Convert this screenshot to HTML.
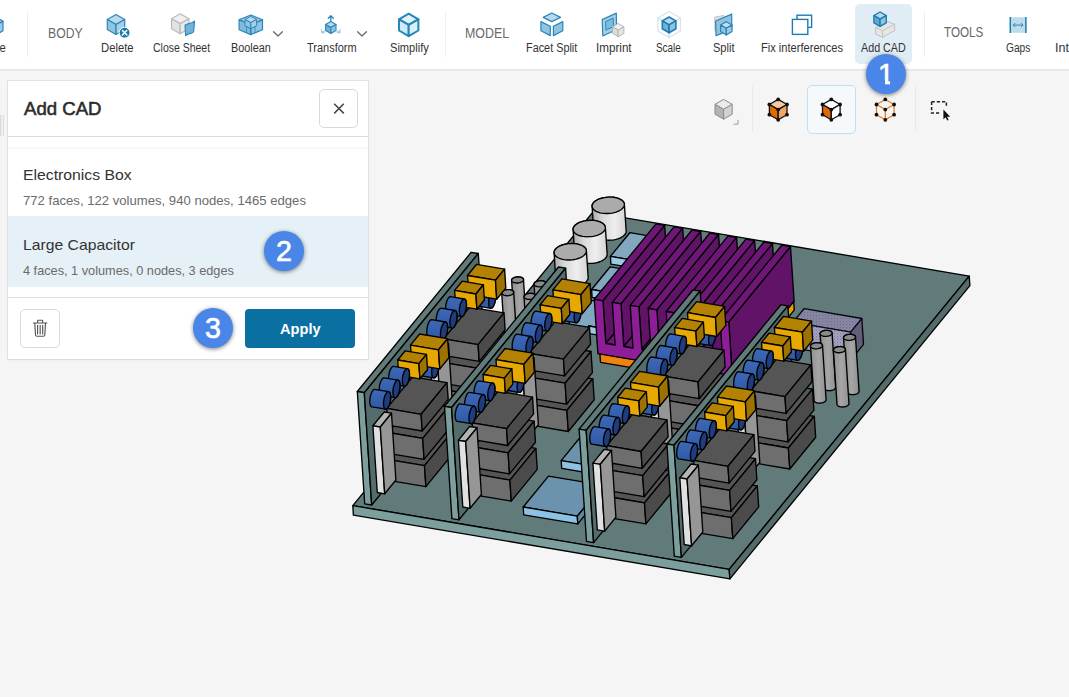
<!DOCTYPE html>
<html lang="en"><head><meta charset="utf-8"><title>Add CAD</title>
<style>
html,body{margin:0;padding:0}
body{width:1069px;height:697px;overflow:hidden;position:relative;background:#f5f5f5;font-family:"Liberation Sans",sans-serif}
.model,.icons{position:absolute;left:0;top:0}
.icons{pointer-events:none}
.t{position:absolute;white-space:nowrap;line-height:normal;display:inline-block}
.toolbar{position:absolute;left:0;top:0;width:1069px;height:69px;background:#fff;border-bottom:1px solid #e6e6e6;box-shadow:0 1px 1px rgba(0,0,0,.03)}
.sep{position:absolute;top:11px;width:1px;height:46px;background:#efefef}
.addbtn{position:absolute;left:855px;top:4px;width:57px;height:60px;border-radius:5px;background:#e1edf4}
.panel{position:absolute;left:8px;top:81px;width:360px;height:278px;background:#fff;box-shadow:0 0 0 1px rgba(0,0,0,.07),0 1px 2px rgba(0,0,0,.06)}
.phead{position:absolute;left:0;top:0;width:360px;height:55px;border-bottom:1px solid #dcdcdc}
.xbtn{position:absolute;left:311px;top:8px;width:37px;height:37px;border:1px solid #d9d9d9;border-radius:5px;background:#fff}
.scrollshadow{position:absolute;left:0;top:66px;width:360px;height:6px;background:linear-gradient(#f7f8f8,#fff)}
.ledge{position:absolute;left:0;top:115px;width:5px;height:21px;background:linear-gradient(90deg,#d6dada 0,#d6dada 1px,#eceeee 1px,#eceeee 3.4px,#dde0e0 3.4px,#dde0e0 4.4px,rgba(0,0,0,0) 4.4px)}
.sel{position:absolute;left:0;top:135.2px;width:360px;height:70.4px;background:#e5f0f7}
.pfoot{position:absolute;left:0;top:216px;width:360px;height:62px;border-top:1px solid #e0e0e0}
.trash{position:absolute;left:12.3px;top:228.1px;width:37.3px;height:37.3px;border:1px solid #d9d9d9;border-radius:5px;background:#fff}
.apply{position:absolute;left:237.3px;top:228.1px;width:109.8px;height:39.3px;border-radius:4px;background:#0a70a2}
.badge{position:absolute;width:40px;height:40px;border-radius:50%;background:#4a86e8;box-shadow:0 1px 4px rgba(0,0,0,.5);color:#fff;font-size:28.6px;line-height:41.6px;text-align:center;-webkit-text-stroke:.65px #fff}
.b1m{position:absolute;background:#4a86e8;height:5.4px;top:80.1px;width:7px}
.vsel{position:absolute;left:807px;top:85px;width:47px;height:47px;border:1px solid #bfe0ee;border-radius:5px;background:#f6f9fb}
.vsep{position:absolute;top:86px;width:1px;height:46px;background:#e9e9e9}

</style></head>
<body>
<svg class="model" width="1069" height="697" viewBox="0 0 1069 697">
<defs><linearGradient id="gb" x1="0" y1="0" x2="0" y2="1"><stop offset="0" stop-color="#3d69b8"/><stop offset="1" stop-color="#2f59a6"/></linearGradient><linearGradient id="gc" x1="0" y1="0" x2="1" y2="0"><stop offset="0" stop-color="#aaaaaa"/><stop offset=".3" stop-color="#d9d9d9"/><stop offset=".65" stop-color="#eeeeee"/><stop offset="1" stop-color="#d4d4d4"/></linearGradient><linearGradient id="gp" x1="0" y1="0" x2="1" y2="0"><stop offset="0" stop-color="#8f8f8f"/><stop offset=".5" stop-color="#a6a6a6"/><stop offset="1" stop-color="#919191"/></linearGradient><pattern id="dt" width="3" height="3" patternUnits="userSpaceOnUse"><rect x="0" y="0" width="1.2" height="1.2" fill="#7a3fa8" opacity=".55"/><rect x="1.5" y="1.5" width="1.2" height="1.2" fill="#5a6fb0" opacity=".4"/></pattern></defs>
<polygon points="352.8,505.6 729.2,569.4 969.2,276.1 592.8,212.3" fill="#607b7a" stroke="#000" stroke-width="1.35" stroke-linejoin="round"/><polygon points="353.4,515.1 729.9,578.9 729.2,569.4 352.8,505.6" fill="#7c9f9e" stroke="#000" stroke-width="1.35" stroke-linejoin="round"/><polygon points="729.9,578.9 969.9,285.6 969.2,276.1 729.2,569.4" fill="#546c6b" stroke="#000" stroke-width="1.35" stroke-linejoin="round"/>
<path d="M624.4,204.7 L626.2,231.4 L626.0,232.4 L625.6,233.5 L624.9,234.5 L623.9,235.5 L622.7,236.5 L621.3,237.4 L619.7,238.1 L617.9,238.8 L616.0,239.4 L614.0,239.8 L611.9,240.1 L609.8,240.2 L607.7,240.2 L605.6,240.1 L603.6,239.9 L601.7,239.5 L600.0,238.9 L598.4,238.3 L597.0,237.6 L595.9,236.7 L595.0,235.8 L594.3,234.8 L593.9,233.8 L593.8,232.7 L592.1,206.0 L592.2,204.9 L592.7,203.9 L593.4,202.8 L594.4,201.8 L595.6,200.9 L597.0,200.0 L598.6,199.2 L600.4,198.6 L602.3,198.0 L604.3,197.6 L606.4,197.3 L608.5,197.1 L610.6,197.1 L612.7,197.2 L614.7,197.5 L616.5,197.9 L618.3,198.4 L619.8,199.1 L621.2,199.8 L622.4,200.6 L623.3,201.6 L623.9,202.6 L624.3,203.6Z" fill="url(#gc)" stroke="#000" stroke-width="1.35" stroke-linejoin="round"/><path d="M623.1,207.8 L623.8,206.8 L624.2,205.7 L624.4,204.7 L624.3,203.6 L623.9,202.6 L623.3,201.6 L622.4,200.6 L621.2,199.8 L619.8,199.1 L618.3,198.4 L616.5,197.9 L614.7,197.5 L612.7,197.2 L610.6,197.1 L608.5,197.1 L606.4,197.3 L604.3,197.6 L602.3,198.0 L600.4,198.6 L598.6,199.2 L597.0,200.0 L595.6,200.9 L594.4,201.8 L593.4,202.8 L592.7,203.9 L592.2,204.9 L592.1,206.0 L592.2,207.1 L592.6,208.1 L593.2,209.1 L594.1,210.0 L595.3,210.9 L596.6,211.6 L598.2,212.2 L599.9,212.8 L601.8,213.2 L603.8,213.4 L605.9,213.5 L608.0,213.5 L610.1,213.4 L612.2,213.1 L614.2,212.6 L616.1,212.1 L617.9,211.4 L619.5,210.7 L620.9,209.8 L622.1,208.8Z" fill="#ababab" stroke="#000" stroke-width="1.35"/>
<path d="M605.4,227.9 L607.2,254.6 L607.0,255.6 L606.6,256.7 L605.9,257.8 L604.9,258.8 L603.7,259.7 L602.3,260.6 L600.7,261.3 L598.9,262.0 L597.0,262.6 L595.0,263.0 L592.9,263.3 L590.8,263.4 L588.7,263.5 L586.6,263.3 L584.6,263.1 L582.7,262.7 L581.0,262.2 L579.4,261.5 L578.0,260.8 L576.9,259.9 L576.0,259.0 L575.3,258.0 L574.9,257.0 L574.8,255.9 L573.1,229.2 L573.2,228.1 L573.7,227.1 L574.4,226.0 L575.4,225.0 L576.6,224.1 L578.0,223.2 L579.6,222.4 L581.4,221.8 L583.3,221.2 L585.3,220.8 L587.4,220.5 L589.5,220.3 L591.6,220.3 L593.7,220.4 L595.7,220.7 L597.5,221.1 L599.3,221.6 L600.9,222.3 L602.2,223.0 L603.4,223.9 L604.3,224.8 L604.9,225.8 L605.3,226.8Z" fill="url(#gc)" stroke="#000" stroke-width="1.35" stroke-linejoin="round"/><path d="M604.1,231.1 L604.8,230.0 L605.2,228.9 L605.4,227.9 L605.3,226.8 L604.9,225.8 L604.3,224.8 L603.4,223.9 L602.2,223.0 L600.9,222.3 L599.3,221.6 L597.5,221.1 L595.7,220.7 L593.7,220.4 L591.6,220.3 L589.5,220.3 L587.4,220.5 L585.3,220.8 L583.3,221.2 L581.4,221.8 L579.6,222.4 L578.0,223.2 L576.6,224.1 L575.4,225.0 L574.4,226.0 L573.7,227.1 L573.2,228.1 L573.1,229.2 L573.2,230.3 L573.6,231.3 L574.2,232.3 L575.1,233.2 L576.3,234.1 L577.6,234.8 L579.2,235.5 L581.0,236.0 L582.8,236.4 L584.8,236.6 L586.9,236.8 L589.0,236.7 L591.1,236.6 L593.2,236.3 L595.2,235.9 L597.1,235.3 L598.9,234.6 L600.5,233.9 L601.9,233.0 L603.1,232.1Z" fill="#ababab" stroke="#000" stroke-width="1.35"/>
<polygon points="610.4,256.4 667.2,266.0 686.6,242.3 629.8,232.7" fill="#82a8c0" stroke="#000" stroke-width="1.35" stroke-linejoin="round"/><polygon points="610.9,264.1 667.7,273.7 667.2,266.0 610.4,256.4" fill="#9ccbe8" stroke="#000" stroke-width="1.35" stroke-linejoin="round"/><polygon points="667.7,273.7 687.1,250.1 686.6,242.3 667.2,266.0" fill="#7094ac" stroke="#000" stroke-width="1.35" stroke-linejoin="round"/>
<path d="M586.4,251.1 L588.2,277.8 L588.0,278.9 L587.6,279.9 L586.9,281.0 L585.9,282.0 L584.7,282.9 L583.3,283.8 L581.7,284.6 L579.9,285.2 L578.0,285.8 L576.0,286.2 L573.9,286.5 L571.8,286.7 L569.7,286.7 L567.6,286.5 L565.6,286.3 L563.7,285.9 L562.0,285.4 L560.4,284.7 L559.0,284.0 L557.9,283.1 L557.0,282.2 L556.3,281.2 L556.0,280.2 L555.8,279.1 L554.1,252.4 L554.3,251.3 L554.7,250.3 L555.4,249.2 L556.4,248.2 L557.6,247.3 L559.0,246.4 L560.6,245.7 L562.4,245.0 L564.3,244.4 L566.3,244.0 L568.4,243.7 L570.5,243.6 L572.6,243.5 L574.7,243.7 L576.7,243.9 L578.5,244.3 L580.3,244.8 L581.9,245.5 L583.2,246.2 L584.4,247.1 L585.3,248.0 L585.9,249.0 L586.3,250.0Z" fill="url(#gc)" stroke="#000" stroke-width="1.35" stroke-linejoin="round"/><path d="M585.1,254.3 L585.8,253.2 L586.3,252.2 L586.4,251.1 L586.3,250.0 L585.9,249.0 L585.3,248.0 L584.4,247.1 L583.2,246.2 L581.9,245.5 L580.3,244.8 L578.5,244.3 L576.7,243.9 L574.7,243.7 L572.6,243.5 L570.5,243.6 L568.4,243.7 L566.3,244.0 L564.3,244.4 L562.4,245.0 L560.6,245.7 L559.0,246.4 L557.6,247.3 L556.4,248.2 L555.4,249.2 L554.7,250.3 L554.3,251.3 L554.1,252.4 L554.2,253.5 L554.6,254.5 L555.2,255.5 L556.1,256.4 L557.3,257.3 L558.6,258.0 L560.2,258.7 L562.0,259.2 L563.8,259.6 L565.8,259.8 L567.9,260.0 L570.0,260.0 L572.1,259.8 L574.2,259.5 L576.2,259.1 L578.1,258.5 L579.9,257.8 L581.5,257.1 L582.9,256.2 L584.1,255.3Z" fill="#ababab" stroke="#000" stroke-width="1.35"/>
<polygon points="591.6,289.5 641.1,297.9 659.7,275.2 610.2,266.8" fill="#82a8c0" stroke="#000" stroke-width="1.35" stroke-linejoin="round"/><polygon points="592.1,297.3 641.6,305.7 641.1,297.9 591.6,289.5" fill="#9ccbe8" stroke="#000" stroke-width="1.35" stroke-linejoin="round"/><polygon points="641.6,305.7 660.2,282.9 659.7,275.2 641.1,297.9" fill="#7094ac" stroke="#000" stroke-width="1.35" stroke-linejoin="round"/>
<polygon points="555.2,334.0 579.0,338.1 588.9,326.0 619.2,331.1 637.8,308.4 583.7,299.2" fill="#82a8c0" stroke="#000" stroke-width="1.35" stroke-linejoin="round"/><polygon points="555.7,341.8 579.5,345.8 579.0,338.1 555.2,334.0" fill="#9ccbe8" stroke="#000" stroke-width="1.35" stroke-linejoin="round"/><polygon points="589.4,333.7 619.7,338.8 619.2,331.1 588.9,326.0" fill="#9ccbe8" stroke="#000" stroke-width="1.35" stroke-linejoin="round"/><polygon points="579.5,345.8 589.4,333.7 588.9,326.0 579.0,338.1" fill="#7094ac" stroke="#000" stroke-width="1.35" stroke-linejoin="round"/><polygon points="619.7,338.8 638.3,316.1 637.8,308.4 619.2,331.1" fill="#7094ac" stroke="#000" stroke-width="1.35" stroke-linejoin="round"/>
<path d="M515.1,334.5 L511.6,280.2 L511.6,279.8 L511.8,279.4 L512.1,279.1 L512.4,278.7 L512.9,278.3 L513.4,278.0 L514.0,277.7 L514.6,277.5 L515.3,277.3 L516.1,277.1 L516.9,277.0 L517.6,277.0 L518.4,276.9 L519.2,277.0 L519.9,277.1 L520.6,277.2 L521.3,277.4 L521.9,277.7 L522.4,277.9 L522.8,278.3 L523.1,278.6 L523.4,279.0 L523.5,279.3 L523.5,279.7 L527.1,334.0 L527.1,334.4 L526.9,334.8 L526.6,335.2 L526.3,335.6 L525.8,335.9 L525.3,336.2 L524.7,336.5 L524.1,336.8 L523.3,337.0 L522.6,337.1 L521.8,337.2 L521.0,337.3 L520.3,337.3 L519.5,337.3 L518.8,337.2 L518.1,337.0 L517.4,336.8 L516.8,336.6 L516.3,336.3 L515.9,336.0 L515.6,335.6 L515.3,335.3 L515.2,334.9Z" fill="url(#gp)" stroke="#000" stroke-width="1.35" stroke-linejoin="round"/><path d="M523.1,280.9 L523.3,280.5 L523.5,280.1 L523.5,279.7 L523.5,279.3 L523.4,279.0 L523.1,278.6 L522.8,278.3 L522.4,277.9 L521.9,277.7 L521.3,277.4 L520.6,277.2 L519.9,277.1 L519.2,277.0 L518.4,276.9 L517.6,277.0 L516.9,277.0 L516.1,277.1 L515.3,277.3 L514.6,277.5 L514.0,277.7 L513.4,278.0 L512.9,278.3 L512.4,278.7 L512.1,279.1 L511.8,279.4 L511.6,279.8 L511.6,280.2 L511.6,280.6 L511.7,281.0 L512.0,281.4 L512.3,281.7 L512.7,282.0 L513.3,282.3 L513.8,282.5 L514.5,282.7 L515.2,282.9 L515.9,283.0 L516.7,283.0 L517.5,283.0 L518.2,283.0 L519.0,282.9 L519.8,282.7 L520.5,282.5 L521.1,282.2 L521.7,282.0 L522.3,281.6 L522.7,281.3Z" fill="#8a8a8a" stroke="#000" stroke-width="1.35"/>
<path d="M537.6,338.3 L534.0,284.0 L534.1,283.6 L534.2,283.2 L534.5,282.9 L534.9,282.5 L535.3,282.1 L535.8,281.8 L536.4,281.5 L537.1,281.3 L537.8,281.1 L538.5,280.9 L539.3,280.8 L540.1,280.8 L540.9,280.7 L541.6,280.8 L542.4,280.9 L543.1,281.0 L543.7,281.2 L544.3,281.5 L544.8,281.7 L545.2,282.1 L545.6,282.4 L545.8,282.8 L546.0,283.1 L546.0,283.5 L549.6,337.8 L549.5,338.2 L549.4,338.6 L549.1,339.0 L548.7,339.4 L548.3,339.7 L547.8,340.0 L547.2,340.3 L546.5,340.6 L545.8,340.8 L545.1,340.9 L544.3,341.0 L543.5,341.1 L542.7,341.1 L542.0,341.1 L541.2,341.0 L540.5,340.8 L539.9,340.6 L539.3,340.4 L538.8,340.1 L538.4,339.8 L538.0,339.5 L537.8,339.1 L537.6,338.7Z" fill="url(#gp)" stroke="#000" stroke-width="1.35" stroke-linejoin="round"/><path d="M545.5,284.7 L545.8,284.3 L545.9,283.9 L546.0,283.5 L546.0,283.1 L545.8,282.8 L545.6,282.4 L545.2,282.1 L544.8,281.7 L544.3,281.5 L543.7,281.2 L543.1,281.0 L542.4,280.9 L541.6,280.8 L540.9,280.7 L540.1,280.8 L539.3,280.8 L538.5,280.9 L537.8,281.1 L537.1,281.3 L536.4,281.5 L535.8,281.8 L535.3,282.1 L534.9,282.5 L534.5,282.9 L534.2,283.2 L534.1,283.6 L534.0,284.0 L534.1,284.4 L534.2,284.8 L534.4,285.2 L534.8,285.5 L535.2,285.8 L535.7,286.1 L536.3,286.4 L536.9,286.5 L537.6,286.7 L538.4,286.8 L539.1,286.8 L539.9,286.8 L540.7,286.8 L541.5,286.7 L542.2,286.5 L542.9,286.3 L543.6,286.1 L544.2,285.8 L544.7,285.4 L545.2,285.1Z" fill="#8a8a8a" stroke="#000" stroke-width="1.35"/>
<path d="M505.3,347.2 L501.7,292.9 L501.8,292.5 L502.0,292.1 L502.2,291.7 L502.6,291.3 L503.0,291.0 L503.6,290.7 L504.1,290.4 L504.8,290.1 L505.5,289.9 L506.3,289.8 L507.0,289.7 L507.8,289.6 L508.6,289.6 L509.4,289.6 L510.1,289.7 L510.8,289.9 L511.4,290.1 L512.0,290.3 L512.5,290.6 L513.0,290.9 L513.3,291.2 L513.5,291.6 L513.7,292.0 L513.7,292.4 L517.3,346.7 L517.2,347.1 L517.1,347.5 L516.8,347.8 L516.4,348.2 L516.0,348.6 L515.5,348.9 L514.9,349.2 L514.2,349.4 L513.5,349.6 L512.8,349.8 L512.0,349.9 L511.2,349.9 L510.4,350.0 L509.7,349.9 L508.9,349.8 L508.2,349.7 L507.6,349.5 L507.0,349.2 L506.5,349.0 L506.1,348.6 L505.7,348.3 L505.5,347.9 L505.4,347.6Z" fill="url(#gp)" stroke="#000" stroke-width="1.35" stroke-linejoin="round"/><path d="M513.2,293.6 L513.5,293.2 L513.7,292.8 L513.7,292.4 L513.7,292.0 L513.5,291.6 L513.3,291.2 L513.0,290.9 L512.5,290.6 L512.0,290.3 L511.4,290.1 L510.8,289.9 L510.1,289.7 L509.4,289.6 L508.6,289.6 L507.8,289.6 L507.0,289.7 L506.3,289.8 L505.5,289.9 L504.8,290.1 L504.1,290.4 L503.6,290.7 L503.0,291.0 L502.6,291.3 L502.2,291.7 L502.0,292.1 L501.8,292.5 L501.7,292.9 L501.8,293.3 L501.9,293.7 L502.2,294.0 L502.5,294.4 L502.9,294.7 L503.4,295.0 L504.0,295.2 L504.7,295.4 L505.4,295.5 L506.1,295.6 L506.9,295.7 L507.6,295.7 L508.4,295.6 L509.2,295.5 L509.9,295.3 L510.6,295.1 L511.3,294.9 L511.9,294.6 L512.4,294.3 L512.9,293.9Z" fill="#8a8a8a" stroke="#000" stroke-width="1.35"/>
<polygon points="599.9,353.7 732.5,376.2 793.7,301.4 661.0,279.0" fill="#f0820f" stroke="#000" stroke-width="1.35" stroke-linejoin="round"/><polygon points="600.5,362.3 733.1,384.8 732.5,376.2 599.9,353.7" fill="#f0820f" stroke="#000" stroke-width="1.35" stroke-linejoin="round"/><polygon points="733.1,384.8 794.2,310.1 793.7,301.4 732.5,376.2" fill="#e8a000" stroke="#000" stroke-width="1.35" stroke-linejoin="round"/><polygon points="597.1,342.0 731.6,364.8 793.3,289.3 658.8,266.5" fill="#6e1776" stroke="#000" stroke-width="1.35" stroke-linejoin="round"/><polygon points="594.3,299.3 603.0,300.8 664.7,225.4 656.0,223.9" fill="#6e1776" stroke="#000" stroke-width="1.35" stroke-linejoin="round"/><polygon points="605.8,343.5 667.5,268.0 664.7,225.4 603.0,300.8" fill="#611467" stroke="#000" stroke-width="1.35" stroke-linejoin="round"/><polygon points="612.3,302.4 621.0,303.9 682.7,228.4 674.0,226.9" fill="#6e1776" stroke="#000" stroke-width="1.35" stroke-linejoin="round"/><polygon points="623.8,346.5 685.5,271.1 682.7,228.4 621.0,303.9" fill="#611467" stroke="#000" stroke-width="1.35" stroke-linejoin="round"/><polygon points="630.2,305.4 638.9,306.9 700.7,231.5 692.0,230.0" fill="#6e1776" stroke="#000" stroke-width="1.35" stroke-linejoin="round"/><polygon points="641.8,349.5 703.5,274.1 700.7,231.5 638.9,306.9" fill="#611467" stroke="#000" stroke-width="1.35" stroke-linejoin="round"/><polygon points="648.2,308.5 656.9,309.9 718.6,234.5 709.9,233.0" fill="#6e1776" stroke="#000" stroke-width="1.35" stroke-linejoin="round"/><polygon points="659.7,352.6 721.4,277.2 718.6,234.5 656.9,309.9" fill="#611467" stroke="#000" stroke-width="1.35" stroke-linejoin="round"/><polygon points="666.2,311.5 674.9,313.0 736.6,237.6 727.9,236.1" fill="#6e1776" stroke="#000" stroke-width="1.35" stroke-linejoin="round"/><polygon points="677.7,355.6 739.4,280.2 736.6,237.6 674.9,313.0" fill="#611467" stroke="#000" stroke-width="1.35" stroke-linejoin="round"/><polygon points="684.1,314.6 692.8,316.0 754.6,240.6 745.9,239.1" fill="#6e1776" stroke="#000" stroke-width="1.35" stroke-linejoin="round"/><polygon points="695.6,358.7 757.4,283.2 754.6,240.6 692.8,316.0" fill="#611467" stroke="#000" stroke-width="1.35" stroke-linejoin="round"/><polygon points="702.1,317.6 710.8,319.1 772.5,243.6 763.8,242.2" fill="#6e1776" stroke="#000" stroke-width="1.35" stroke-linejoin="round"/><polygon points="713.6,361.7 775.3,286.3 772.5,243.6 710.8,319.1" fill="#611467" stroke="#000" stroke-width="1.35" stroke-linejoin="round"/><polygon points="720.1,320.7 728.8,322.1 790.5,246.7 781.8,245.2" fill="#6e1776" stroke="#000" stroke-width="1.35" stroke-linejoin="round"/><polygon points="732.3,376.4 794.1,301.0 790.5,246.7 728.8,322.1" fill="#611467" stroke="#000" stroke-width="1.35" stroke-linejoin="round"/><polygon points="597.9,353.6 732.3,376.4 728.8,322.1 720.1,320.7 722.9,363.3 713.6,361.7 710.8,319.1 702.1,317.6 704.9,360.2 695.6,358.7 692.8,316.0 684.1,314.6 686.9,357.2 677.7,355.6 674.9,313.0 666.2,311.5 669.0,354.2 659.7,352.6 656.9,309.9 648.2,308.5 651.0,351.1 641.8,349.5 638.9,306.9 630.2,305.4 633.0,348.1 623.8,346.5 621.0,303.9 612.3,302.4 615.1,345.0 605.8,343.5 603.0,300.8 594.3,299.3" fill="#8e1e98" stroke="#000" stroke-width="1.35" stroke-linejoin="round"/>
<path d="M527.6,350.9 L524.0,296.7 L524.1,296.3 L524.2,295.9 L524.5,295.5 L524.9,295.1 L525.3,294.8 L525.8,294.4 L526.4,294.2 L527.1,293.9 L527.8,293.7 L528.5,293.5 L529.3,293.4 L530.1,293.4 L530.9,293.4 L531.6,293.4 L532.4,293.5 L533.1,293.7 L533.7,293.9 L534.3,294.1 L534.8,294.4 L535.2,294.7 L535.6,295.0 L535.8,295.4 L535.9,295.8 L536.0,296.2 L539.6,350.4 L539.5,350.8 L539.3,351.2 L539.1,351.6 L538.7,352.0 L538.3,352.3 L537.8,352.7 L537.2,352.9 L536.5,353.2 L535.8,353.4 L535.0,353.6 L534.3,353.7 L533.5,353.7 L532.7,353.7 L531.9,353.7 L531.2,353.6 L530.5,353.4 L529.9,353.2 L529.3,353.0 L528.8,352.7 L528.3,352.4 L528.0,352.1 L527.8,351.7 L527.6,351.3Z" fill="url(#gp)" stroke="#000" stroke-width="1.35" stroke-linejoin="round"/><path d="M535.5,297.3 L535.8,297.0 L535.9,296.6 L536.0,296.2 L535.9,295.8 L535.8,295.4 L535.6,295.0 L535.2,294.7 L534.8,294.4 L534.3,294.1 L533.7,293.9 L533.1,293.7 L532.4,293.5 L531.6,293.4 L530.9,293.4 L530.1,293.4 L529.3,293.4 L528.5,293.5 L527.8,293.7 L527.1,293.9 L526.4,294.2 L525.8,294.4 L525.3,294.8 L524.9,295.1 L524.5,295.5 L524.2,295.9 L524.1,296.3 L524.0,296.7 L524.0,297.1 L524.2,297.4 L524.4,297.8 L524.8,298.1 L525.2,298.5 L525.7,298.7 L526.3,299.0 L526.9,299.2 L527.6,299.3 L528.4,299.4 L529.1,299.5 L529.9,299.4 L530.7,299.4 L531.5,299.3 L532.2,299.1 L532.9,298.9 L533.6,298.7 L534.2,298.4 L534.7,298.1 L535.1,297.7Z" fill="#8a8a8a" stroke="#000" stroke-width="1.35"/>
<polygon points="793.0,322.3 850.8,332.1 861.8,318.5 804.1,308.7" fill="#868a9c" stroke="#000" stroke-width="1.35" stroke-linejoin="round"/><polygon points="794.7,348.1 852.5,357.9 850.8,332.1 793.0,322.3" fill="#a3a7bc" stroke="#000" stroke-width="1.35" stroke-linejoin="round"/><polygon points="852.5,357.9 863.5,344.4 861.8,318.5 850.8,332.1" fill="#5e6170" stroke="#000" stroke-width="1.35" stroke-linejoin="round"/><polygon points="793.0,322.3 850.8,332.1 861.8,318.5 804.1,308.7" fill="url(#dt)"/><polygon points="794.7,348.1 852.5,357.9 850.8,332.1 793.0,322.3" fill="url(#dt)"/><polygon points="852.5,357.9 863.5,344.4 861.8,318.5 850.8,332.1" fill="url(#dt)"/>
<path d="M823.7,387.9 L820.1,333.6 L820.2,333.2 L820.4,332.8 L820.6,332.4 L821.0,332.1 L821.4,331.7 L822.0,331.4 L822.5,331.1 L823.2,330.9 L823.9,330.7 L824.7,330.5 L825.4,330.4 L826.2,330.3 L827.0,330.3 L827.8,330.4 L828.5,330.5 L829.2,330.6 L829.8,330.8 L830.4,331.1 L830.9,331.3 L831.4,331.6 L831.7,332.0 L831.9,332.4 L832.1,332.7 L832.1,333.1 L835.7,387.4 L835.6,387.8 L835.5,388.2 L835.2,388.6 L834.8,388.9 L834.4,389.3 L833.9,389.6 L833.3,389.9 L832.6,390.2 L831.9,390.4 L831.2,390.5 L830.4,390.6 L829.6,390.7 L828.8,390.7 L828.1,390.6 L827.3,390.5 L826.6,390.4 L826.0,390.2 L825.4,390.0 L824.9,389.7 L824.5,389.4 L824.1,389.0 L823.9,388.7 L823.8,388.3Z" fill="url(#gp)" stroke="#000" stroke-width="1.35" stroke-linejoin="round"/><path d="M831.6,334.3 L831.9,333.9 L832.0,333.5 L832.1,333.1 L832.1,332.7 L831.9,332.4 L831.7,332.0 L831.4,331.6 L830.9,331.3 L830.4,331.1 L829.8,330.8 L829.2,330.6 L828.5,330.5 L827.8,330.4 L827.0,330.3 L826.2,330.3 L825.4,330.4 L824.7,330.5 L823.9,330.7 L823.2,330.9 L822.5,331.1 L822.0,331.4 L821.4,331.7 L821.0,332.1 L820.6,332.4 L820.4,332.8 L820.2,333.2 L820.1,333.6 L820.2,334.0 L820.3,334.4 L820.6,334.8 L820.9,335.1 L821.3,335.4 L821.8,335.7 L822.4,335.9 L823.1,336.1 L823.7,336.3 L824.5,336.4 L825.3,336.4 L826.0,336.4 L826.8,336.4 L827.6,336.2 L828.3,336.1 L829.0,335.9 L829.7,335.6 L830.3,335.3 L830.8,335.0 L831.3,334.7Z" fill="#8a8a8a" stroke="#000" stroke-width="1.35"/>
<path d="M847.1,391.9 L843.5,337.6 L843.6,337.2 L843.7,336.8 L844.0,336.4 L844.4,336.0 L844.8,335.7 L845.3,335.4 L845.9,335.1 L846.6,334.8 L847.3,334.6 L848.0,334.5 L848.8,334.4 L849.6,334.3 L850.4,334.3 L851.1,334.3 L851.9,334.4 L852.6,334.6 L853.2,334.8 L853.8,335.0 L854.3,335.3 L854.7,335.6 L855.1,335.9 L855.3,336.3 L855.4,336.7 L855.5,337.1 L859.1,391.4 L859.0,391.8 L858.8,392.2 L858.6,392.5 L858.2,392.9 L857.8,393.3 L857.3,393.6 L856.7,393.9 L856.0,394.1 L855.3,394.3 L854.5,394.5 L853.8,394.6 L853.0,394.6 L852.2,394.7 L851.4,394.6 L850.7,394.5 L850.0,394.4 L849.4,394.2 L848.8,393.9 L848.3,393.7 L847.8,393.3 L847.5,393.0 L847.3,392.6 L847.1,392.3Z" fill="url(#gp)" stroke="#000" stroke-width="1.35" stroke-linejoin="round"/><path d="M855.0,338.3 L855.3,337.9 L855.4,337.5 L855.5,337.1 L855.4,336.7 L855.3,336.3 L855.1,335.9 L854.7,335.6 L854.3,335.3 L853.8,335.0 L853.2,334.8 L852.6,334.6 L851.9,334.4 L851.1,334.3 L850.4,334.3 L849.6,334.3 L848.8,334.4 L848.0,334.5 L847.3,334.6 L846.6,334.8 L845.9,335.1 L845.3,335.4 L844.8,335.7 L844.4,336.0 L844.0,336.4 L843.7,336.8 L843.6,337.2 L843.5,337.6 L843.5,338.0 L843.7,338.4 L843.9,338.7 L844.3,339.1 L844.7,339.4 L845.2,339.7 L845.8,339.9 L846.4,340.1 L847.1,340.2 L847.9,340.3 L848.6,340.4 L849.4,340.4 L850.2,340.3 L851.0,340.2 L851.7,340.0 L852.4,339.8 L853.1,339.6 L853.7,339.3 L854.2,339.0 L854.6,338.6Z" fill="#8a8a8a" stroke="#000" stroke-width="1.35"/>
<path d="M814.1,400.3 L810.5,346.0 L810.6,345.6 L810.7,345.2 L811.0,344.9 L811.3,344.5 L811.8,344.1 L812.3,343.8 L812.9,343.5 L813.6,343.3 L814.3,343.1 L815.0,342.9 L815.8,342.8 L816.6,342.7 L817.4,342.7 L818.1,342.8 L818.9,342.9 L819.6,343.0 L820.2,343.2 L820.8,343.5 L821.3,343.7 L821.7,344.1 L822.1,344.4 L822.3,344.8 L822.4,345.1 L822.5,345.5 L826.1,399.8 L826.0,400.2 L825.8,400.6 L825.6,401.0 L825.2,401.4 L824.8,401.7 L824.2,402.0 L823.6,402.3 L823.0,402.6 L822.3,402.8 L821.5,402.9 L820.8,403.0 L820.0,403.1 L819.2,403.1 L818.4,403.1 L817.7,403.0 L817.0,402.8 L816.4,402.6 L815.8,402.4 L815.3,402.1 L814.8,401.8 L814.5,401.4 L814.3,401.1 L814.1,400.7Z" fill="url(#gp)" stroke="#000" stroke-width="1.35" stroke-linejoin="round"/><path d="M822.0,346.7 L822.3,346.3 L822.4,345.9 L822.5,345.5 L822.4,345.1 L822.3,344.8 L822.1,344.4 L821.7,344.1 L821.3,343.7 L820.8,343.5 L820.2,343.2 L819.6,343.0 L818.9,342.9 L818.1,342.8 L817.4,342.7 L816.6,342.7 L815.8,342.8 L815.0,342.9 L814.3,343.1 L813.6,343.3 L812.9,343.5 L812.3,343.8 L811.8,344.1 L811.3,344.5 L811.0,344.9 L810.7,345.2 L810.6,345.6 L810.5,346.0 L810.5,346.4 L810.7,346.8 L810.9,347.2 L811.3,347.5 L811.7,347.8 L812.2,348.1 L812.8,348.3 L813.4,348.5 L814.1,348.7 L814.9,348.8 L815.6,348.8 L816.4,348.8 L817.2,348.8 L818.0,348.7 L818.7,348.5 L819.4,348.3 L820.1,348.0 L820.7,347.8 L821.2,347.4 L821.6,347.1Z" fill="#8a8a8a" stroke="#000" stroke-width="1.35"/>
<path d="M837.0,404.2 L833.4,349.9 L833.5,349.5 L833.6,349.1 L833.9,348.7 L834.3,348.4 L834.7,348.0 L835.2,347.7 L835.8,347.4 L836.5,347.2 L837.2,347.0 L837.9,346.8 L838.7,346.7 L839.5,346.6 L840.3,346.6 L841.0,346.7 L841.8,346.8 L842.5,346.9 L843.1,347.1 L843.7,347.3 L844.2,347.6 L844.6,347.9 L845.0,348.3 L845.2,348.6 L845.4,349.0 L845.4,349.4 L849.0,403.7 L848.9,404.1 L848.8,404.5 L848.5,404.9 L848.1,405.2 L847.7,405.6 L847.2,405.9 L846.6,406.2 L845.9,406.4 L845.2,406.6 L844.5,406.8 L843.7,406.9 L842.9,407.0 L842.1,407.0 L841.4,406.9 L840.6,406.8 L839.9,406.7 L839.3,406.5 L838.7,406.3 L838.2,406.0 L837.8,405.7 L837.4,405.3 L837.2,405.0 L837.0,404.6Z" fill="url(#gp)" stroke="#000" stroke-width="1.35" stroke-linejoin="round"/><path d="M844.9,350.6 L845.2,350.2 L845.3,349.8 L845.4,349.4 L845.4,349.0 L845.2,348.6 L845.0,348.3 L844.6,347.9 L844.2,347.6 L843.7,347.3 L843.1,347.1 L842.5,346.9 L841.8,346.8 L841.0,346.7 L840.3,346.6 L839.5,346.6 L838.7,346.7 L837.9,346.8 L837.2,347.0 L836.5,347.2 L835.8,347.4 L835.2,347.7 L834.7,348.0 L834.3,348.4 L833.9,348.7 L833.6,349.1 L833.5,349.5 L833.4,349.9 L833.5,350.3 L833.6,350.7 L833.8,351.1 L834.2,351.4 L834.6,351.7 L835.1,352.0 L835.7,352.2 L836.3,352.4 L837.0,352.6 L837.8,352.7 L838.5,352.7 L839.3,352.7 L840.1,352.6 L840.9,352.5 L841.6,352.4 L842.3,352.2 L843.0,351.9 L843.6,351.6 L844.1,351.3 L844.5,351.0Z" fill="#8a8a8a" stroke="#000" stroke-width="1.35"/>
<polygon points="357.3,391.5 364.3,392.7 478.3,253.5 471.2,252.3" fill="#607b7a" stroke="#000" stroke-width="1.35" stroke-linejoin="round"/><polygon points="364.7,503.8 371.7,505.0 364.3,392.7 357.3,391.5" fill="#7c9f9e" stroke="#000" stroke-width="1.35" stroke-linejoin="round"/><polygon points="371.7,505.0 485.7,365.7 478.3,253.5 364.3,392.7" fill="#546c6b" stroke="#000" stroke-width="1.35" stroke-linejoin="round"/>
<path d="M475.2,287.6 L493.5,290.7 L493.9,290.8 L494.3,291.0 L494.7,291.4 L495.0,291.9 L495.3,292.6 L495.5,293.4 L495.6,294.2 L495.7,295.2 L495.8,296.2 L495.7,297.3 L495.6,298.5 L495.5,299.6 L495.3,300.7 L495.0,301.9 L494.7,303.0 L494.4,304.0 L494.0,304.9 L493.6,305.8 L493.2,306.5 L492.7,307.2 L492.2,307.7 L491.8,308.0 L491.3,308.2 L490.9,308.3 L472.5,305.2 L472.1,305.1 L471.7,304.9 L471.4,304.5 L471.1,303.9 L470.8,303.3 L470.6,302.5 L470.4,301.7 L470.3,300.7 L470.3,299.7 L470.3,298.6 L470.4,297.4 L470.6,296.3 L470.8,295.1 L471.0,294.0 L471.3,292.9 L471.7,291.9 L472.0,291.0 L472.5,290.1 L472.9,289.3 L473.4,288.7 L473.8,288.2 L474.3,287.9 L474.7,287.7Z" fill="url(#gb)" stroke="#000" stroke-width="1.35" stroke-linejoin="round"/><path d="M495.7,295.2 L495.6,294.2 L495.5,293.4 L495.3,292.6 L495.0,291.9 L494.7,291.4 L494.3,291.0 L493.9,290.8 L493.5,290.7 L493.1,290.8 L492.6,291.0 L492.2,291.3 L491.7,291.8 L491.2,292.5 L490.8,293.2 L490.4,294.1 L490.0,295.0 L489.6,296.0 L489.3,297.1 L489.1,298.2 L488.9,299.4 L488.7,300.5 L488.7,301.7 L488.6,302.8 L488.7,303.8 L488.8,304.8 L488.9,305.6 L489.1,306.4 L489.4,307.1 L489.7,307.6 L490.1,308.0 L490.5,308.2 L490.9,308.3 L491.3,308.2 L491.8,308.0 L492.2,307.7 L492.7,307.2 L493.2,306.5 L493.6,305.8 L494.0,304.9 L494.4,304.0 L494.7,303.0 L495.0,301.9 L495.3,300.7 L495.5,299.6 L495.6,298.5 L495.7,297.3 L495.8,296.2Z" fill="#203c7c" stroke="#000" stroke-width="1.35"/>
<polygon points="467.5,275.5 495.5,280.2 504.6,269.1 476.6,264.3" fill="#b48202" stroke="#000" stroke-width="1.35" stroke-linejoin="round"/><polygon points="468.8,294.5 496.7,299.2 495.5,280.2 467.5,275.5" fill="#e8a802" stroke="#000" stroke-width="1.35" stroke-linejoin="round"/><polygon points="496.7,299.2 505.8,288.1 504.6,269.1 495.5,280.2" fill="#9e7201" stroke="#000" stroke-width="1.35" stroke-linejoin="round"/>
<polygon points="447.1,390.1 481.5,396.0 507.4,364.3 473.0,358.5" fill="#555555" stroke="#000" stroke-width="1.35" stroke-linejoin="round"/><polygon points="448.5,411.2 482.9,417.0 481.5,396.0 447.1,390.1" fill="#6e6e6e" stroke="#000" stroke-width="1.35" stroke-linejoin="round"/><polygon points="482.9,417.0 508.8,385.3 507.4,364.3 481.5,396.0" fill="#4b4b4b" stroke="#000" stroke-width="1.35" stroke-linejoin="round"/><polygon points="445.3,362.9 479.7,368.7 505.6,337.1 471.2,331.2" fill="#555555" stroke="#000" stroke-width="1.35" stroke-linejoin="round"/><polygon points="446.7,383.9 481.1,389.8 479.7,368.7 445.3,362.9" fill="#6e6e6e" stroke="#000" stroke-width="1.35" stroke-linejoin="round"/><polygon points="481.1,389.8 507.0,358.1 505.6,337.1 479.7,368.7" fill="#4b4b4b" stroke="#000" stroke-width="1.35" stroke-linejoin="round"/><polygon points="443.7,338.8 478.1,344.6 504.0,312.9 469.7,307.1" fill="#555555" stroke="#000" stroke-width="1.35" stroke-linejoin="round"/><polygon points="444.8,355.6 479.2,361.4 478.1,344.6 443.7,338.8" fill="#6e6e6e" stroke="#000" stroke-width="1.35" stroke-linejoin="round"/><polygon points="479.2,361.4 505.1,329.7 504.0,312.9 478.1,344.6" fill="#4b4b4b" stroke="#000" stroke-width="1.35" stroke-linejoin="round"/>
<polygon points="454.6,290.4 475.9,294.0 483.4,284.8 462.2,281.2" fill="#b48202" stroke="#000" stroke-width="1.35" stroke-linejoin="round"/><polygon points="455.7,305.6 476.9,309.2 475.9,294.0 454.6,290.4" fill="#e8a802" stroke="#000" stroke-width="1.35" stroke-linejoin="round"/><polygon points="476.9,309.2 484.4,300.0 483.4,284.8 475.9,294.0" fill="#9e7201" stroke="#000" stroke-width="1.35" stroke-linejoin="round"/>
<polygon points="429.9,356.1 437.2,357.4 448.5,343.6 441.2,342.4" fill="#b4b4b4" stroke="#000" stroke-width="1.35" stroke-linejoin="round"/><polygon points="434.3,422.9 441.7,424.2 437.2,357.4 429.9,356.1" fill="#e0e0e0" stroke="#000" stroke-width="1.35" stroke-linejoin="round"/><polygon points="441.7,424.2 452.9,410.4 448.5,343.6 437.2,357.4" fill="#969696" stroke="#000" stroke-width="1.35" stroke-linejoin="round"/>
<path d="M450.5,296.7 L464.2,299.0 L464.6,299.1 L465.0,299.3 L465.4,299.7 L465.7,300.2 L466.0,300.9 L466.2,301.7 L466.3,302.5 L466.4,303.5 L466.5,304.5 L466.4,305.6 L466.3,306.7 L466.2,307.9 L466.0,309.0 L465.7,310.2 L465.4,311.3 L465.1,312.3 L464.7,313.2 L464.3,314.1 L463.9,314.8 L463.4,315.5 L462.9,316.0 L462.5,316.3 L462.0,316.5 L461.6,316.6 L447.8,314.3 L447.4,314.2 L447.0,313.9 L446.7,313.5 L446.3,313.0 L446.1,312.4 L445.9,311.6 L445.7,310.7 L445.6,309.8 L445.6,308.7 L445.6,307.6 L445.7,306.5 L445.8,305.4 L446.0,304.2 L446.3,303.1 L446.6,302.0 L446.9,301.0 L447.3,300.0 L447.7,299.2 L448.2,298.4 L448.6,297.8 L449.1,297.3 L449.6,296.9 L450.0,296.7Z" fill="url(#gb)" stroke="#000" stroke-width="1.35" stroke-linejoin="round"/><path d="M466.4,303.5 L466.3,302.5 L466.2,301.7 L466.0,300.9 L465.7,300.2 L465.4,299.7 L465.0,299.3 L464.6,299.1 L464.2,299.0 L463.8,299.1 L463.3,299.3 L462.9,299.6 L462.4,300.1 L461.9,300.8 L461.5,301.5 L461.1,302.4 L460.7,303.3 L460.3,304.3 L460.0,305.4 L459.8,306.5 L459.6,307.7 L459.4,308.8 L459.4,310.0 L459.3,311.1 L459.4,312.1 L459.5,313.1 L459.6,313.9 L459.8,314.7 L460.1,315.4 L460.4,315.9 L460.8,316.3 L461.2,316.5 L461.6,316.6 L462.0,316.5 L462.5,316.3 L462.9,316.0 L463.4,315.5 L463.9,314.8 L464.3,314.1 L464.7,313.2 L465.1,312.3 L465.4,311.3 L465.7,310.2 L466.0,309.0 L466.2,307.9 L466.3,306.7 L466.4,305.6 L466.5,304.5Z" fill="#203c7c" stroke="#000" stroke-width="1.35"/>
<path d="M441.1,308.2 L454.8,310.5 L455.2,310.6 L455.6,310.8 L456.0,311.2 L456.3,311.7 L456.5,312.4 L456.7,313.2 L456.9,314.0 L457.0,315.0 L457.0,316.0 L457.0,317.1 L456.9,318.3 L456.8,319.4 L456.6,320.6 L456.3,321.7 L456.0,322.8 L455.7,323.8 L455.3,324.7 L454.9,325.6 L454.4,326.3 L454.0,327.0 L453.5,327.5 L453.1,327.8 L452.6,328.0 L452.2,328.1 L438.4,325.8 L438.0,325.7 L437.6,325.4 L437.2,325.1 L436.9,324.5 L436.7,323.9 L436.5,323.1 L436.3,322.2 L436.2,321.3 L436.2,320.2 L436.2,319.1 L436.3,318.0 L436.4,316.9 L436.6,315.7 L436.9,314.6 L437.2,313.5 L437.5,312.5 L437.9,311.5 L438.3,310.7 L438.8,309.9 L439.2,309.3 L439.7,308.8 L440.2,308.5 L440.6,308.2Z" fill="url(#gb)" stroke="#000" stroke-width="1.35" stroke-linejoin="round"/><path d="M457.0,315.0 L456.9,314.0 L456.7,313.2 L456.5,312.4 L456.3,311.7 L456.0,311.2 L455.6,310.8 L455.2,310.6 L454.8,310.5 L454.4,310.6 L453.9,310.8 L453.4,311.1 L453.0,311.6 L452.5,312.3 L452.1,313.0 L451.7,313.9 L451.3,314.8 L450.9,315.8 L450.6,316.9 L450.4,318.0 L450.2,319.2 L450.0,320.3 L449.9,321.5 L449.9,322.6 L450.0,323.6 L450.1,324.6 L450.2,325.4 L450.4,326.2 L450.7,326.9 L451.0,327.4 L451.3,327.8 L451.7,328.0 L452.2,328.1 L452.6,328.0 L453.1,327.8 L453.5,327.5 L454.0,327.0 L454.4,326.3 L454.9,325.6 L455.3,324.7 L455.7,323.8 L456.0,322.8 L456.3,321.7 L456.6,320.6 L456.8,319.4 L456.9,318.3 L457.0,317.1 L457.0,316.0Z" fill="#203c7c" stroke="#000" stroke-width="1.35"/>
<path d="M431.6,319.7 L445.4,322.0 L445.8,322.1 L446.2,322.3 L446.5,322.7 L446.9,323.2 L447.1,323.9 L447.3,324.7 L447.5,325.5 L447.6,326.5 L447.6,327.5 L447.6,328.6 L447.5,329.8 L447.4,330.9 L447.2,332.1 L446.9,333.2 L446.6,334.3 L446.3,335.3 L445.9,336.2 L445.5,337.1 L445.0,337.8 L444.6,338.5 L444.1,339.0 L443.6,339.3 L443.2,339.5 L442.7,339.6 L429.0,337.3 L428.6,337.2 L428.2,336.9 L427.8,336.6 L427.5,336.0 L427.3,335.4 L427.0,334.6 L426.9,333.7 L426.8,332.8 L426.8,331.7 L426.8,330.7 L426.9,329.5 L427.0,328.4 L427.2,327.2 L427.5,326.1 L427.8,325.0 L428.1,324.0 L428.5,323.0 L428.9,322.2 L429.3,321.4 L429.8,320.8 L430.3,320.3 L430.7,320.0 L431.2,319.8Z" fill="url(#gb)" stroke="#000" stroke-width="1.35" stroke-linejoin="round"/><path d="M447.6,326.5 L447.5,325.5 L447.3,324.7 L447.1,323.9 L446.9,323.2 L446.5,322.7 L446.2,322.3 L445.8,322.1 L445.4,322.0 L444.9,322.1 L444.5,322.3 L444.0,322.6 L443.6,323.1 L443.1,323.8 L442.7,324.5 L442.2,325.4 L441.9,326.3 L441.5,327.3 L441.2,328.4 L441.0,329.6 L440.8,330.7 L440.6,331.9 L440.5,333.0 L440.5,334.1 L440.5,335.1 L440.6,336.1 L440.8,337.0 L441.0,337.7 L441.3,338.4 L441.6,338.9 L441.9,339.3 L442.3,339.5 L442.7,339.6 L443.2,339.5 L443.6,339.3 L444.1,339.0 L444.6,338.5 L445.0,337.8 L445.5,337.1 L445.9,336.2 L446.3,335.3 L446.6,334.3 L446.9,333.2 L447.2,332.1 L447.4,330.9 L447.5,329.8 L447.6,328.6 L447.6,327.5Z" fill="#203c7c" stroke="#000" stroke-width="1.35"/>
<path d="M418.2,357.2 L436.5,360.3 L437.0,360.4 L437.3,360.7 L437.7,361.0 L438.0,361.6 L438.3,362.2 L438.5,363.0 L438.6,363.9 L438.7,364.8 L438.8,365.9 L438.7,367.0 L438.7,368.1 L438.5,369.2 L438.3,370.4 L438.1,371.5 L437.8,372.6 L437.4,373.6 L437.0,374.6 L436.6,375.4 L436.2,376.2 L435.7,376.8 L435.3,377.3 L434.8,377.6 L434.3,377.9 L433.9,377.9 L415.6,374.8 L415.1,374.7 L414.7,374.5 L414.4,374.1 L414.1,373.6 L413.8,372.9 L413.6,372.2 L413.5,371.3 L413.4,370.3 L413.3,369.3 L413.3,368.2 L413.4,367.1 L413.6,365.9 L413.8,364.8 L414.0,363.6 L414.3,362.6 L414.7,361.5 L415.1,360.6 L415.5,359.7 L415.9,359.0 L416.4,358.4 L416.8,357.9 L417.3,357.5 L417.8,357.3Z" fill="url(#gb)" stroke="#000" stroke-width="1.35" stroke-linejoin="round"/><path d="M438.7,364.8 L438.6,363.9 L438.5,363.0 L438.3,362.2 L438.0,361.6 L437.7,361.0 L437.3,360.7 L437.0,360.4 L436.5,360.3 L436.1,360.4 L435.6,360.6 L435.2,361.0 L434.7,361.5 L434.3,362.1 L433.8,362.8 L433.4,363.7 L433.0,364.6 L432.7,365.7 L432.4,366.8 L432.1,367.9 L431.9,369.0 L431.8,370.2 L431.7,371.3 L431.7,372.4 L431.7,373.4 L431.8,374.4 L431.9,375.3 L432.2,376.0 L432.4,376.7 L432.7,377.2 L433.1,377.6 L433.5,377.8 L433.9,377.9 L434.3,377.9 L434.8,377.6 L435.3,377.3 L435.7,376.8 L436.2,376.2 L436.6,375.4 L437.0,374.6 L437.4,373.6 L437.8,372.6 L438.1,371.5 L438.3,370.4 L438.5,369.2 L438.7,368.1 L438.7,367.0 L438.8,365.9Z" fill="#203c7c" stroke="#000" stroke-width="1.35"/>
<polygon points="410.5,345.1 438.5,349.8 447.6,338.7 419.6,334.0" fill="#b48202" stroke="#000" stroke-width="1.35" stroke-linejoin="round"/><polygon points="411.8,364.1 439.8,368.9 438.5,349.8 410.5,345.1" fill="#e8a802" stroke="#000" stroke-width="1.35" stroke-linejoin="round"/><polygon points="439.8,368.9 448.9,357.8 447.6,338.7 438.5,349.8" fill="#9e7201" stroke="#000" stroke-width="1.35" stroke-linejoin="round"/>
<polygon points="390.1,459.8 424.5,465.6 450.4,433.9 416.1,428.1" fill="#555555" stroke="#000" stroke-width="1.35" stroke-linejoin="round"/><polygon points="391.5,480.8 425.9,486.6 424.5,465.6 390.1,459.8" fill="#6e6e6e" stroke="#000" stroke-width="1.35" stroke-linejoin="round"/><polygon points="425.9,486.6 451.8,454.9 450.4,433.9 424.5,465.6" fill="#4b4b4b" stroke="#000" stroke-width="1.35" stroke-linejoin="round"/><polygon points="388.3,432.5 422.7,438.4 448.6,406.7 414.3,400.9" fill="#555555" stroke="#000" stroke-width="1.35" stroke-linejoin="round"/><polygon points="389.7,453.6 424.1,459.4 422.7,438.4 388.3,432.5" fill="#6e6e6e" stroke="#000" stroke-width="1.35" stroke-linejoin="round"/><polygon points="424.1,459.4 450.0,427.7 448.6,406.7 422.7,438.4" fill="#4b4b4b" stroke="#000" stroke-width="1.35" stroke-linejoin="round"/><polygon points="386.8,408.4 421.1,414.3 447.0,382.6 412.7,376.8" fill="#555555" stroke="#000" stroke-width="1.35" stroke-linejoin="round"/><polygon points="387.9,425.2 422.2,431.0 421.1,414.3 386.8,408.4" fill="#6e6e6e" stroke="#000" stroke-width="1.35" stroke-linejoin="round"/><polygon points="422.2,431.0 448.2,399.4 447.0,382.6 421.1,414.3" fill="#4b4b4b" stroke="#000" stroke-width="1.35" stroke-linejoin="round"/>
<polygon points="444.5,406.3 451.6,407.5 565.6,268.2 558.5,267.0" fill="#607b7a" stroke="#000" stroke-width="1.35" stroke-linejoin="round"/><polygon points="451.9,518.6 459.0,519.8 451.6,407.5 444.5,406.3" fill="#7c9f9e" stroke="#000" stroke-width="1.35" stroke-linejoin="round"/><polygon points="459.0,519.8 573.0,380.5 565.6,268.2 451.6,407.5" fill="#546c6b" stroke="#000" stroke-width="1.35" stroke-linejoin="round"/>
<path d="M560.6,302.1 L578.9,305.2 L579.4,305.3 L579.8,305.5 L580.1,305.9 L580.4,306.4 L580.7,307.1 L580.9,307.8 L581.0,308.7 L581.1,309.7 L581.2,310.7 L581.2,311.8 L581.1,312.9 L580.9,314.1 L580.7,315.2 L580.5,316.3 L580.2,317.4 L579.8,318.5 L579.4,319.4 L579.0,320.3 L578.6,321.0 L578.1,321.6 L577.7,322.1 L577.2,322.5 L576.7,322.7 L576.3,322.8 L558.0,319.7 L557.5,319.6 L557.2,319.3 L556.8,318.9 L556.5,318.4 L556.2,317.8 L556.0,317.0 L555.9,316.1 L555.8,315.2 L555.7,314.1 L555.8,313.0 L555.8,311.9 L556.0,310.8 L556.2,309.6 L556.4,308.5 L556.7,307.4 L557.1,306.4 L557.5,305.4 L557.9,304.6 L558.3,303.8 L558.8,303.2 L559.2,302.7 L559.7,302.3 L560.2,302.1Z" fill="url(#gb)" stroke="#000" stroke-width="1.35" stroke-linejoin="round"/><path d="M581.1,309.7 L581.0,308.7 L580.9,307.8 L580.7,307.1 L580.4,306.4 L580.1,305.9 L579.8,305.5 L579.4,305.3 L578.9,305.2 L578.5,305.2 L578.0,305.5 L577.6,305.8 L577.1,306.3 L576.7,306.9 L576.2,307.7 L575.8,308.5 L575.4,309.5 L575.1,310.5 L574.8,311.6 L574.5,312.7 L574.3,313.9 L574.2,315.0 L574.1,316.1 L574.1,317.2 L574.1,318.3 L574.2,319.2 L574.4,320.1 L574.6,320.9 L574.8,321.5 L575.1,322.1 L575.5,322.4 L575.9,322.7 L576.3,322.8 L576.7,322.7 L577.2,322.5 L577.7,322.1 L578.1,321.6 L578.6,321.0 L579.0,320.3 L579.4,319.4 L579.8,318.5 L580.2,317.4 L580.5,316.3 L580.7,315.2 L580.9,314.1 L581.1,312.9 L581.2,311.8 L581.2,310.7Z" fill="#203c7c" stroke="#000" stroke-width="1.35"/>
<polygon points="552.9,289.9 580.9,294.7 590.0,283.6 562.0,278.8" fill="#b48202" stroke="#000" stroke-width="1.35" stroke-linejoin="round"/><polygon points="554.2,309.0 582.2,313.7 580.9,294.7 552.9,289.9" fill="#e8a802" stroke="#000" stroke-width="1.35" stroke-linejoin="round"/><polygon points="582.2,313.7 591.3,302.6 590.0,283.6 580.9,294.7" fill="#9e7201" stroke="#000" stroke-width="1.35" stroke-linejoin="round"/>
<polygon points="532.6,404.6 566.9,410.4 592.8,378.8 558.5,372.9" fill="#555555" stroke="#000" stroke-width="1.35" stroke-linejoin="round"/><polygon points="533.9,425.6 568.3,431.5 566.9,410.4 532.6,404.6" fill="#6e6e6e" stroke="#000" stroke-width="1.35" stroke-linejoin="round"/><polygon points="568.3,431.5 594.2,399.8 592.8,378.8 566.9,410.4" fill="#4b4b4b" stroke="#000" stroke-width="1.35" stroke-linejoin="round"/><polygon points="530.8,377.4 565.1,383.2 591.0,351.5 556.7,345.7" fill="#555555" stroke="#000" stroke-width="1.35" stroke-linejoin="round"/><polygon points="532.1,398.4 566.5,404.2 565.1,383.2 530.8,377.4" fill="#6e6e6e" stroke="#000" stroke-width="1.35" stroke-linejoin="round"/><polygon points="566.5,404.2 592.4,372.6 591.0,351.5 565.1,383.2" fill="#4b4b4b" stroke="#000" stroke-width="1.35" stroke-linejoin="round"/><polygon points="529.2,353.3 563.5,359.1 589.5,327.4 555.1,321.6" fill="#555555" stroke="#000" stroke-width="1.35" stroke-linejoin="round"/><polygon points="530.3,370.1 564.6,375.9 563.5,359.1 529.2,353.3" fill="#6e6e6e" stroke="#000" stroke-width="1.35" stroke-linejoin="round"/><polygon points="564.6,375.9 590.6,344.2 589.5,327.4 563.5,359.1" fill="#4b4b4b" stroke="#000" stroke-width="1.35" stroke-linejoin="round"/>
<polygon points="540.1,304.8 561.3,308.4 568.9,299.3 547.6,295.6" fill="#b48202" stroke="#000" stroke-width="1.35" stroke-linejoin="round"/><polygon points="541.1,320.1 562.3,323.7 561.3,308.4 540.1,304.8" fill="#e8a802" stroke="#000" stroke-width="1.35" stroke-linejoin="round"/><polygon points="562.3,323.7 569.9,314.5 568.9,299.3 561.3,308.4" fill="#9e7201" stroke="#000" stroke-width="1.35" stroke-linejoin="round"/>
<polygon points="515.3,370.6 522.7,371.9 534.0,358.1 526.6,356.8" fill="#b4b4b4" stroke="#000" stroke-width="1.35" stroke-linejoin="round"/><polygon points="519.7,437.4 527.1,438.6 522.7,371.9 515.3,370.6" fill="#e0e0e0" stroke="#000" stroke-width="1.35" stroke-linejoin="round"/><polygon points="527.1,438.6 538.4,424.8 534.0,358.1 522.7,371.9" fill="#969696" stroke="#000" stroke-width="1.35" stroke-linejoin="round"/>
<path d="M535.9,311.1 L549.6,313.5 L550.1,313.6 L550.5,313.8 L550.8,314.2 L551.1,314.7 L551.4,315.4 L551.6,316.1 L551.7,317.0 L551.8,318.0 L551.9,319.0 L551.9,320.1 L551.8,321.2 L551.6,322.4 L551.4,323.5 L551.2,324.6 L550.9,325.7 L550.5,326.8 L550.1,327.7 L549.7,328.6 L549.3,329.3 L548.8,329.9 L548.4,330.4 L547.9,330.8 L547.4,331.0 L547.0,331.1 L533.3,328.7 L532.8,328.6 L532.4,328.4 L532.1,328.0 L531.8,327.5 L531.5,326.8 L531.3,326.1 L531.1,325.2 L531.1,324.2 L531.0,323.2 L531.0,322.1 L531.1,321.0 L531.3,319.8 L531.5,318.7 L531.7,317.6 L532.0,316.5 L532.4,315.5 L532.8,314.5 L533.2,313.6 L533.6,312.9 L534.1,312.3 L534.5,311.8 L535.0,311.4 L535.5,311.2Z" fill="url(#gb)" stroke="#000" stroke-width="1.35" stroke-linejoin="round"/><path d="M551.8,318.0 L551.7,317.0 L551.6,316.1 L551.4,315.4 L551.1,314.7 L550.8,314.2 L550.5,313.8 L550.1,313.6 L549.6,313.5 L549.2,313.5 L548.7,313.7 L548.3,314.1 L547.8,314.6 L547.4,315.2 L546.9,316.0 L546.5,316.8 L546.1,317.8 L545.8,318.8 L545.5,319.9 L545.2,321.0 L545.0,322.2 L544.9,323.3 L544.8,324.4 L544.8,325.5 L544.8,326.6 L544.9,327.5 L545.1,328.4 L545.3,329.2 L545.5,329.8 L545.8,330.3 L546.2,330.7 L546.6,331.0 L547.0,331.1 L547.4,331.0 L547.9,330.8 L548.4,330.4 L548.8,329.9 L549.3,329.3 L549.7,328.6 L550.1,327.7 L550.5,326.8 L550.9,325.7 L551.2,324.6 L551.4,323.5 L551.6,322.4 L551.8,321.2 L551.9,320.1 L551.9,319.0Z" fill="#203c7c" stroke="#000" stroke-width="1.35"/>
<path d="M526.5,322.7 L540.2,325.0 L540.6,325.1 L541.0,325.3 L541.4,325.7 L541.7,326.2 L542.0,326.9 L542.2,327.6 L542.3,328.5 L542.4,329.5 L542.5,330.5 L542.4,331.6 L542.4,332.7 L542.2,333.9 L542.0,335.0 L541.8,336.2 L541.5,337.2 L541.1,338.3 L540.7,339.2 L540.3,340.1 L539.9,340.8 L539.4,341.4 L538.9,341.9 L538.5,342.3 L538.0,342.5 L537.6,342.6 L523.8,340.2 L523.4,340.1 L523.0,339.9 L522.7,339.5 L522.4,339.0 L522.1,338.4 L521.9,337.6 L521.7,336.7 L521.6,335.8 L521.6,334.7 L521.6,333.6 L521.7,332.5 L521.9,331.3 L522.1,330.2 L522.3,329.1 L522.6,328.0 L523.0,327.0 L523.3,326.0 L523.8,325.2 L524.2,324.4 L524.7,323.8 L525.1,323.3 L525.6,322.9 L526.0,322.7Z" fill="url(#gb)" stroke="#000" stroke-width="1.35" stroke-linejoin="round"/><path d="M542.4,329.5 L542.3,328.5 L542.2,327.6 L542.0,326.9 L541.7,326.2 L541.4,325.7 L541.0,325.3 L540.6,325.1 L540.2,325.0 L539.8,325.0 L539.3,325.3 L538.9,325.6 L538.4,326.1 L537.9,326.7 L537.5,327.5 L537.1,328.3 L536.7,329.3 L536.4,330.3 L536.1,331.4 L535.8,332.5 L535.6,333.7 L535.5,334.8 L535.4,336.0 L535.3,337.0 L535.4,338.1 L535.5,339.0 L535.6,339.9 L535.8,340.7 L536.1,341.3 L536.4,341.9 L536.8,342.2 L537.2,342.5 L537.6,342.6 L538.0,342.5 L538.5,342.3 L538.9,341.9 L539.4,341.4 L539.9,340.8 L540.3,340.1 L540.7,339.2 L541.1,338.3 L541.5,337.2 L541.8,336.2 L542.0,335.0 L542.2,333.9 L542.4,332.7 L542.4,331.6 L542.5,330.5Z" fill="#203c7c" stroke="#000" stroke-width="1.35"/>
<polygon points="561.2,460.6 615.3,469.7 633.1,448.0 579.0,438.8" fill="#6b93ad" stroke="#000" stroke-width="1.35" stroke-linejoin="round"/><polygon points="561.7,468.3 615.8,477.5 615.3,469.7 561.2,460.6" fill="#8cc3e4" stroke="#000" stroke-width="1.35" stroke-linejoin="round"/><polygon points="615.8,477.5 633.6,455.7 633.1,448.0 615.3,469.7" fill="#5f87a3" stroke="#000" stroke-width="1.35" stroke-linejoin="round"/>
<path d="M517.1,334.2 L530.8,336.5 L531.2,336.6 L531.6,336.8 L532.0,337.2 L532.3,337.7 L532.5,338.4 L532.8,339.1 L532.9,340.0 L533.0,341.0 L533.0,342.0 L533.0,343.1 L532.9,344.2 L532.8,345.4 L532.6,346.5 L532.3,347.7 L532.0,348.7 L531.7,349.8 L531.3,350.7 L530.9,351.6 L530.4,352.3 L530.0,353.0 L529.5,353.4 L529.1,353.8 L528.6,354.0 L528.2,354.1 L514.4,351.7 L514.0,351.7 L513.6,351.4 L513.3,351.0 L512.9,350.5 L512.7,349.9 L512.5,349.1 L512.3,348.2 L512.2,347.3 L512.2,346.2 L512.2,345.1 L512.3,344.0 L512.4,342.9 L512.6,341.7 L512.9,340.6 L513.2,339.5 L513.5,338.5 L513.9,337.5 L514.3,336.7 L514.8,335.9 L515.2,335.3 L515.7,334.8 L516.2,334.4 L516.6,334.2Z" fill="url(#gb)" stroke="#000" stroke-width="1.35" stroke-linejoin="round"/><path d="M533.0,341.0 L532.9,340.0 L532.8,339.1 L532.5,338.4 L532.3,337.7 L532.0,337.2 L531.6,336.8 L531.2,336.6 L530.8,336.5 L530.4,336.6 L529.9,336.8 L529.4,337.1 L529.0,337.6 L528.5,338.2 L528.1,339.0 L527.7,339.9 L527.3,340.8 L526.9,341.8 L526.6,342.9 L526.4,344.0 L526.2,345.2 L526.0,346.3 L526.0,347.5 L525.9,348.6 L526.0,349.6 L526.1,350.6 L526.2,351.4 L526.4,352.2 L526.7,352.8 L527.0,353.4 L527.4,353.8 L527.7,354.0 L528.2,354.1 L528.6,354.0 L529.1,353.8 L529.5,353.4 L530.0,353.0 L530.4,352.3 L530.9,351.6 L531.3,350.7 L531.7,349.8 L532.0,348.7 L532.3,347.7 L532.6,346.5 L532.8,345.4 L532.9,344.2 L533.0,343.1 L533.0,342.0Z" fill="#203c7c" stroke="#000" stroke-width="1.35"/>
<path d="M503.6,371.7 L522.0,374.8 L522.4,374.9 L522.8,375.1 L523.1,375.5 L523.4,376.0 L523.7,376.7 L523.9,377.5 L524.1,378.3 L524.2,379.3 L524.2,380.3 L524.2,381.4 L524.1,382.6 L523.9,383.7 L523.7,384.9 L523.5,386.0 L523.2,387.1 L522.8,388.1 L522.5,389.0 L522.0,389.9 L521.6,390.6 L521.1,391.3 L520.7,391.8 L520.2,392.1 L519.8,392.3 L519.3,392.4 L501.0,389.3 L500.6,389.2 L500.2,389.0 L499.8,388.6 L499.5,388.1 L499.2,387.4 L499.0,386.6 L498.9,385.8 L498.8,384.8 L498.8,383.8 L498.8,382.7 L498.9,381.5 L499.0,380.4 L499.2,379.2 L499.5,378.1 L499.8,377.0 L500.1,376.0 L500.5,375.1 L500.9,374.2 L501.3,373.5 L501.8,372.8 L502.3,372.3 L502.7,372.0 L503.2,371.8Z" fill="url(#gb)" stroke="#000" stroke-width="1.35" stroke-linejoin="round"/><path d="M524.2,379.3 L524.1,378.3 L523.9,377.5 L523.7,376.7 L523.4,376.0 L523.1,375.5 L522.8,375.1 L522.4,374.9 L522.0,374.8 L521.5,374.9 L521.1,375.1 L520.6,375.4 L520.1,375.9 L519.7,376.6 L519.2,377.3 L518.8,378.2 L518.4,379.1 L518.1,380.1 L517.8,381.2 L517.5,382.4 L517.3,383.5 L517.2,384.6 L517.1,385.8 L517.1,386.9 L517.1,387.9 L517.2,388.9 L517.4,389.7 L517.6,390.5 L517.8,391.2 L518.2,391.7 L518.5,392.1 L518.9,392.3 L519.3,392.4 L519.8,392.3 L520.2,392.1 L520.7,391.8 L521.1,391.3 L521.6,390.6 L522.0,389.9 L522.5,389.0 L522.8,388.1 L523.2,387.1 L523.5,386.0 L523.7,384.9 L523.9,383.7 L524.1,382.6 L524.2,381.4 L524.2,380.3Z" fill="#203c7c" stroke="#000" stroke-width="1.35"/>
<polygon points="397.7,360.0 418.9,363.6 426.5,354.4 405.2,350.8" fill="#b48202" stroke="#000" stroke-width="1.35" stroke-linejoin="round"/><polygon points="398.7,375.2 419.9,378.8 418.9,363.6 397.7,360.0" fill="#e8a802" stroke="#000" stroke-width="1.35" stroke-linejoin="round"/><polygon points="419.9,378.8 427.5,369.7 426.5,354.4 418.9,363.6" fill="#9e7201" stroke="#000" stroke-width="1.35" stroke-linejoin="round"/>
<polygon points="496.0,359.6 523.9,364.3 533.0,353.2 505.1,348.5" fill="#b48202" stroke="#000" stroke-width="1.35" stroke-linejoin="round"/><polygon points="497.2,378.6 525.2,383.4 523.9,364.3 496.0,359.6" fill="#e8a802" stroke="#000" stroke-width="1.35" stroke-linejoin="round"/><polygon points="525.2,383.4 534.3,372.2 533.0,353.2 523.9,364.3" fill="#9e7201" stroke="#000" stroke-width="1.35" stroke-linejoin="round"/>
<polygon points="475.6,474.2 509.9,480.1 535.9,448.4 501.5,442.6" fill="#555555" stroke="#000" stroke-width="1.35" stroke-linejoin="round"/><polygon points="477.0,495.3 511.3,501.1 509.9,480.1 475.6,474.2" fill="#6e6e6e" stroke="#000" stroke-width="1.35" stroke-linejoin="round"/><polygon points="511.3,501.1 537.2,469.4 535.9,448.4 509.9,480.1" fill="#4b4b4b" stroke="#000" stroke-width="1.35" stroke-linejoin="round"/><polygon points="473.8,447.0 508.1,452.8 534.1,421.2 499.7,415.3" fill="#555555" stroke="#000" stroke-width="1.35" stroke-linejoin="round"/><polygon points="475.2,468.0 509.5,473.9 508.1,452.8 473.8,447.0" fill="#6e6e6e" stroke="#000" stroke-width="1.35" stroke-linejoin="round"/><polygon points="509.5,473.9 535.5,442.2 534.1,421.2 508.1,452.8" fill="#4b4b4b" stroke="#000" stroke-width="1.35" stroke-linejoin="round"/><polygon points="472.2,422.9 506.6,428.7 532.5,397.1 498.1,391.2" fill="#555555" stroke="#000" stroke-width="1.35" stroke-linejoin="round"/><polygon points="473.3,439.7 507.7,445.5 506.6,428.7 472.2,422.9" fill="#6e6e6e" stroke="#000" stroke-width="1.35" stroke-linejoin="round"/><polygon points="507.7,445.5 533.6,413.9 532.5,397.1 506.6,428.7" fill="#4b4b4b" stroke="#000" stroke-width="1.35" stroke-linejoin="round"/>
<polygon points="372.9,425.8 380.3,427.0 391.5,413.2 384.2,412.0" fill="#b4b4b4" stroke="#000" stroke-width="1.35" stroke-linejoin="round"/><polygon points="377.3,492.5 384.7,493.8 380.3,427.0 372.9,425.8" fill="#e0e0e0" stroke="#000" stroke-width="1.35" stroke-linejoin="round"/><polygon points="384.7,493.8 395.9,480.0 391.5,413.2 380.3,427.0" fill="#969696" stroke="#000" stroke-width="1.35" stroke-linejoin="round"/>
<path d="M393.5,366.3 L407.2,368.6 L407.7,368.7 L408.0,369.0 L408.4,369.3 L408.7,369.9 L409.0,370.5 L409.2,371.3 L409.3,372.2 L409.4,373.1 L409.5,374.2 L409.4,375.3 L409.4,376.4 L409.2,377.5 L409.0,378.7 L408.8,379.8 L408.5,380.9 L408.1,381.9 L407.7,382.9 L407.3,383.7 L406.9,384.5 L406.4,385.1 L406.0,385.6 L405.5,385.9 L405.0,386.2 L404.6,386.2 L390.8,383.9 L390.4,383.8 L390.0,383.6 L389.7,383.2 L389.4,382.7 L389.1,382.0 L388.9,381.2 L388.7,380.4 L388.6,379.4 L388.6,378.4 L388.6,377.3 L388.7,376.1 L388.9,375.0 L389.1,373.8 L389.3,372.7 L389.6,371.6 L390.0,370.6 L390.3,369.7 L390.8,368.8 L391.2,368.1 L391.7,367.4 L392.1,366.9 L392.6,366.6 L393.0,366.4Z" fill="url(#gb)" stroke="#000" stroke-width="1.35" stroke-linejoin="round"/><path d="M409.4,373.1 L409.3,372.2 L409.2,371.3 L409.0,370.5 L408.7,369.9 L408.4,369.3 L408.0,369.0 L407.7,368.7 L407.2,368.6 L406.8,368.7 L406.3,368.9 L405.9,369.3 L405.4,369.8 L405.0,370.4 L404.5,371.1 L404.1,372.0 L403.7,372.9 L403.4,374.0 L403.1,375.0 L402.8,376.2 L402.6,377.3 L402.5,378.5 L402.4,379.6 L402.4,380.7 L402.4,381.7 L402.5,382.7 L402.6,383.6 L402.9,384.3 L403.1,385.0 L403.4,385.5 L403.8,385.9 L404.2,386.1 L404.6,386.2 L405.0,386.2 L405.5,385.9 L406.0,385.6 L406.4,385.1 L406.9,384.5 L407.3,383.7 L407.7,382.9 L408.1,381.9 L408.5,380.9 L408.8,379.8 L409.0,378.7 L409.2,377.5 L409.4,376.4 L409.4,375.3 L409.5,374.2Z" fill="#203c7c" stroke="#000" stroke-width="1.35"/>
<polygon points="523.2,507.0 577.3,516.2 602.6,485.2 548.5,476.1" fill="#6b93ad" stroke="#000" stroke-width="1.35" stroke-linejoin="round"/><polygon points="523.7,514.8 577.8,523.9 577.3,516.2 523.2,507.0" fill="#8cc3e4" stroke="#000" stroke-width="1.35" stroke-linejoin="round"/><polygon points="577.8,523.9 603.1,493.0 602.6,485.2 577.3,516.2" fill="#5f87a3" stroke="#000" stroke-width="1.35" stroke-linejoin="round"/>
<polygon points="579.1,429.1 586.2,430.3 700.1,291.0 693.1,289.8" fill="#607b7a" stroke="#000" stroke-width="1.35" stroke-linejoin="round"/><polygon points="586.5,541.4 593.6,542.6 586.2,430.3 579.1,429.1" fill="#7c9f9e" stroke="#000" stroke-width="1.35" stroke-linejoin="round"/><polygon points="593.6,542.6 707.5,403.3 700.1,291.0 586.2,430.3" fill="#546c6b" stroke="#000" stroke-width="1.35" stroke-linejoin="round"/>
<path d="M695.2,324.9 L713.5,328.0 L713.9,328.1 L714.3,328.3 L714.7,328.7 L715.0,329.2 L715.2,329.9 L715.5,330.6 L715.6,331.5 L715.7,332.5 L715.7,333.5 L715.7,334.6 L715.6,335.7 L715.5,336.9 L715.3,338.0 L715.0,339.2 L714.7,340.2 L714.4,341.3 L714.0,342.2 L713.6,343.1 L713.1,343.8 L712.7,344.4 L712.2,344.9 L711.8,345.3 L711.3,345.5 L710.9,345.6 L692.5,342.5 L692.1,342.4 L691.7,342.1 L691.4,341.7 L691.1,341.2 L690.8,340.6 L690.6,339.8 L690.4,338.9 L690.3,338.0 L690.3,336.9 L690.3,335.8 L690.4,334.7 L690.5,333.6 L690.7,332.4 L691.0,331.3 L691.3,330.2 L691.7,329.2 L692.0,328.2 L692.4,327.4 L692.9,326.6 L693.3,326.0 L693.8,325.5 L694.3,325.1 L694.7,324.9Z" fill="url(#gb)" stroke="#000" stroke-width="1.35" stroke-linejoin="round"/><path d="M715.7,332.5 L715.6,331.5 L715.5,330.6 L715.2,329.9 L715.0,329.2 L714.7,328.7 L714.3,328.3 L713.9,328.1 L713.5,328.0 L713.1,328.0 L712.6,328.3 L712.1,328.6 L711.7,329.1 L711.2,329.7 L710.8,330.5 L710.4,331.3 L710.0,332.3 L709.6,333.3 L709.3,334.4 L709.1,335.5 L708.9,336.7 L708.7,337.8 L708.6,338.9 L708.6,340.0 L708.7,341.1 L708.8,342.0 L708.9,342.9 L709.1,343.7 L709.4,344.3 L709.7,344.9 L710.0,345.2 L710.4,345.5 L710.9,345.6 L711.3,345.5 L711.8,345.3 L712.2,344.9 L712.7,344.4 L713.1,343.8 L713.6,343.1 L714.0,342.2 L714.4,341.3 L714.7,340.2 L715.0,339.2 L715.3,338.0 L715.5,336.9 L715.6,335.7 L715.7,334.6 L715.7,333.5Z" fill="#203c7c" stroke="#000" stroke-width="1.35"/>
<polygon points="687.5,312.7 715.5,317.5 724.6,306.4 696.6,301.6" fill="#b48202" stroke="#000" stroke-width="1.35" stroke-linejoin="round"/><polygon points="688.8,331.8 716.7,336.5 715.5,317.5 687.5,312.7" fill="#e8a802" stroke="#000" stroke-width="1.35" stroke-linejoin="round"/><polygon points="716.7,336.5 725.8,325.4 724.6,306.4 715.5,317.5" fill="#9e7201" stroke="#000" stroke-width="1.35" stroke-linejoin="round"/>
<polygon points="667.1,427.4 701.5,433.2 727.4,401.6 693.0,395.7" fill="#555555" stroke="#000" stroke-width="1.35" stroke-linejoin="round"/><polygon points="668.5,448.4 702.9,454.3 701.5,433.2 667.1,427.4" fill="#6e6e6e" stroke="#000" stroke-width="1.35" stroke-linejoin="round"/><polygon points="702.9,454.3 728.8,422.6 727.4,401.6 701.5,433.2" fill="#4b4b4b" stroke="#000" stroke-width="1.35" stroke-linejoin="round"/><polygon points="665.3,400.2 699.7,406.0 725.6,374.3 691.2,368.5" fill="#555555" stroke="#000" stroke-width="1.35" stroke-linejoin="round"/><polygon points="666.7,421.2 701.1,427.0 699.7,406.0 665.3,400.2" fill="#6e6e6e" stroke="#000" stroke-width="1.35" stroke-linejoin="round"/><polygon points="701.1,427.0 727.0,395.4 725.6,374.3 699.7,406.0" fill="#4b4b4b" stroke="#000" stroke-width="1.35" stroke-linejoin="round"/><polygon points="663.7,376.1 698.1,381.9 724.0,350.2 689.6,344.4" fill="#555555" stroke="#000" stroke-width="1.35" stroke-linejoin="round"/><polygon points="664.8,392.9 699.2,398.7 698.1,381.9 663.7,376.1" fill="#6e6e6e" stroke="#000" stroke-width="1.35" stroke-linejoin="round"/><polygon points="699.2,398.7 725.1,367.0 724.0,350.2 698.1,381.9" fill="#4b4b4b" stroke="#000" stroke-width="1.35" stroke-linejoin="round"/>
<polygon points="674.6,327.6 695.9,331.2 703.4,322.1 682.2,318.4" fill="#b48202" stroke="#000" stroke-width="1.35" stroke-linejoin="round"/><polygon points="675.6,342.9 696.9,346.5 695.9,331.2 674.6,327.6" fill="#e8a802" stroke="#000" stroke-width="1.35" stroke-linejoin="round"/><polygon points="696.9,346.5 704.4,337.3 703.4,322.1 695.9,331.2" fill="#9e7201" stroke="#000" stroke-width="1.35" stroke-linejoin="round"/>
<polygon points="649.9,393.4 657.2,394.7 668.5,380.9 661.2,379.6" fill="#b4b4b4" stroke="#000" stroke-width="1.35" stroke-linejoin="round"/><polygon points="654.3,460.2 661.6,461.4 657.2,394.7 649.9,393.4" fill="#e0e0e0" stroke="#000" stroke-width="1.35" stroke-linejoin="round"/><polygon points="661.6,461.4 672.9,447.6 668.5,380.9 657.2,394.7" fill="#969696" stroke="#000" stroke-width="1.35" stroke-linejoin="round"/>
<path d="M670.5,333.9 L684.2,336.3 L684.6,336.4 L685.0,336.6 L685.4,337.0 L685.7,337.5 L685.9,338.2 L686.2,338.9 L686.3,339.8 L686.4,340.8 L686.4,341.8 L686.4,342.9 L686.3,344.0 L686.2,345.2 L686.0,346.3 L685.7,347.4 L685.4,348.5 L685.1,349.6 L684.7,350.5 L684.3,351.4 L683.8,352.1 L683.4,352.7 L682.9,353.2 L682.5,353.6 L682.0,353.8 L681.6,353.9 L667.8,351.5 L667.4,351.4 L667.0,351.2 L666.6,350.8 L666.3,350.3 L666.1,349.7 L665.9,348.9 L665.7,348.0 L665.6,347.0 L665.6,346.0 L665.6,344.9 L665.7,343.8 L665.8,342.6 L666.0,341.5 L666.3,340.4 L666.6,339.3 L666.9,338.3 L667.3,337.3 L667.7,336.4 L668.2,335.7 L668.6,335.1 L669.1,334.6 L669.6,334.2 L670.0,334.0Z" fill="url(#gb)" stroke="#000" stroke-width="1.35" stroke-linejoin="round"/><path d="M686.4,340.8 L686.3,339.8 L686.2,338.9 L685.9,338.2 L685.7,337.5 L685.4,337.0 L685.0,336.6 L684.6,336.4 L684.2,336.3 L683.8,336.3 L683.3,336.6 L682.8,336.9 L682.4,337.4 L681.9,338.0 L681.5,338.8 L681.1,339.6 L680.7,340.6 L680.3,341.6 L680.0,342.7 L679.8,343.8 L679.6,345.0 L679.4,346.1 L679.4,347.2 L679.3,348.3 L679.4,349.4 L679.5,350.3 L679.6,351.2 L679.8,352.0 L680.1,352.6 L680.4,353.2 L680.8,353.5 L681.1,353.8 L681.6,353.9 L682.0,353.8 L682.5,353.6 L682.9,353.2 L683.4,352.7 L683.8,352.1 L684.3,351.4 L684.7,350.5 L685.1,349.6 L685.4,348.5 L685.7,347.4 L686.0,346.3 L686.2,345.2 L686.3,344.0 L686.4,342.9 L686.4,341.8Z" fill="#203c7c" stroke="#000" stroke-width="1.35"/>
<path d="M661.0,345.5 L674.8,347.8 L675.2,347.9 L675.6,348.1 L676.0,348.5 L676.3,349.0 L676.5,349.7 L676.7,350.4 L676.9,351.3 L677.0,352.3 L677.0,353.3 L677.0,354.4 L676.9,355.5 L676.8,356.7 L676.6,357.8 L676.3,359.0 L676.0,360.0 L675.7,361.1 L675.3,362.0 L674.9,362.9 L674.4,363.6 L674.0,364.2 L673.5,364.7 L673.0,365.1 L672.6,365.3 L672.1,365.4 L658.4,363.0 L658.0,363.0 L657.6,362.7 L657.2,362.3 L656.9,361.8 L656.7,361.2 L656.4,360.4 L656.3,359.5 L656.2,358.6 L656.2,357.5 L656.2,356.4 L656.3,355.3 L656.4,354.1 L656.6,353.0 L656.9,351.9 L657.2,350.8 L657.5,349.8 L657.9,348.8 L658.3,348.0 L658.8,347.2 L659.2,346.6 L659.7,346.1 L660.1,345.7 L660.6,345.5Z" fill="url(#gb)" stroke="#000" stroke-width="1.35" stroke-linejoin="round"/><path d="M677.0,352.3 L676.9,351.3 L676.7,350.4 L676.5,349.7 L676.3,349.0 L676.0,348.5 L675.6,348.1 L675.2,347.9 L674.8,347.8 L674.3,347.8 L673.9,348.1 L673.4,348.4 L673.0,348.9 L672.5,349.5 L672.1,350.3 L671.7,351.1 L671.3,352.1 L670.9,353.1 L670.6,354.2 L670.4,355.3 L670.2,356.5 L670.0,357.6 L669.9,358.8 L669.9,359.8 L669.9,360.9 L670.0,361.8 L670.2,362.7 L670.4,363.5 L670.7,364.1 L671.0,364.7 L671.3,365.0 L671.7,365.3 L672.1,365.4 L672.6,365.3 L673.0,365.1 L673.5,364.7 L674.0,364.2 L674.4,363.6 L674.9,362.9 L675.3,362.0 L675.7,361.1 L676.0,360.0 L676.3,359.0 L676.6,357.8 L676.8,356.7 L676.9,355.5 L677.0,354.4 L677.0,353.3Z" fill="#203c7c" stroke="#000" stroke-width="1.35"/>
<path d="M651.6,357.0 L665.4,359.3 L665.8,359.4 L666.2,359.6 L666.5,360.0 L666.8,360.5 L667.1,361.2 L667.3,361.9 L667.5,362.8 L667.6,363.8 L667.6,364.8 L667.6,365.9 L667.5,367.0 L667.4,368.2 L667.2,369.3 L666.9,370.5 L666.6,371.6 L666.2,372.6 L665.9,373.5 L665.4,374.4 L665.0,375.1 L664.6,375.8 L664.1,376.3 L663.6,376.6 L663.2,376.8 L662.7,376.9 L649.0,374.5 L648.6,374.5 L648.2,374.2 L647.8,373.8 L647.5,373.3 L647.2,372.7 L647.0,371.9 L646.9,371.0 L646.8,370.1 L646.7,369.0 L646.8,367.9 L646.9,366.8 L647.0,365.7 L647.2,364.5 L647.5,363.4 L647.8,362.3 L648.1,361.3 L648.5,360.3 L648.9,359.5 L649.3,358.7 L649.8,358.1 L650.3,357.6 L650.7,357.2 L651.2,357.0Z" fill="url(#gb)" stroke="#000" stroke-width="1.35" stroke-linejoin="round"/><path d="M667.6,363.8 L667.5,362.8 L667.3,361.9 L667.1,361.2 L666.8,360.5 L666.5,360.0 L666.2,359.6 L665.8,359.4 L665.4,359.3 L664.9,359.4 L664.5,359.6 L664.0,359.9 L663.5,360.4 L663.1,361.0 L662.6,361.8 L662.2,362.7 L661.8,363.6 L661.5,364.6 L661.2,365.7 L660.9,366.8 L660.7,368.0 L660.6,369.1 L660.5,370.3 L660.5,371.4 L660.5,372.4 L660.6,373.4 L660.8,374.2 L661.0,375.0 L661.3,375.6 L661.6,376.2 L661.9,376.6 L662.3,376.8 L662.7,376.9 L663.2,376.8 L663.6,376.6 L664.1,376.3 L664.6,375.8 L665.0,375.1 L665.4,374.4 L665.9,373.5 L666.2,372.6 L666.6,371.6 L666.9,370.5 L667.2,369.3 L667.4,368.2 L667.5,367.0 L667.6,365.9 L667.6,364.8Z" fill="#203c7c" stroke="#000" stroke-width="1.35"/>
<polygon points="483.1,374.5 504.4,378.1 511.9,368.9 490.6,365.3" fill="#b48202" stroke="#000" stroke-width="1.35" stroke-linejoin="round"/><polygon points="484.1,389.7 505.4,393.3 504.4,378.1 483.1,374.5" fill="#e8a802" stroke="#000" stroke-width="1.35" stroke-linejoin="round"/><polygon points="505.4,393.3 512.9,384.1 511.9,368.9 504.4,378.1" fill="#9e7201" stroke="#000" stroke-width="1.35" stroke-linejoin="round"/>
<path d="M384.1,377.8 L397.8,380.1 L398.2,380.2 L398.6,380.5 L399.0,380.9 L399.3,381.4 L399.6,382.0 L399.8,382.8 L399.9,383.7 L400.0,384.6 L400.1,385.7 L400.0,386.8 L399.9,387.9 L399.8,389.0 L399.6,390.2 L399.3,391.3 L399.0,392.4 L398.7,393.4 L398.3,394.4 L397.9,395.2 L397.5,396.0 L397.0,396.6 L396.5,397.1 L396.1,397.5 L395.6,397.7 L395.2,397.7 L381.4,395.4 L381.0,395.3 L380.6,395.1 L380.3,394.7 L380.0,394.2 L379.7,393.5 L379.5,392.7 L379.3,391.9 L379.2,390.9 L379.2,389.9 L379.2,388.8 L379.3,387.6 L379.4,386.5 L379.6,385.4 L379.9,384.2 L380.2,383.1 L380.5,382.1 L380.9,381.2 L381.3,380.3 L381.8,379.6 L382.2,378.9 L382.7,378.4 L383.2,378.1 L383.6,377.9Z" fill="url(#gb)" stroke="#000" stroke-width="1.35" stroke-linejoin="round"/><path d="M400.0,384.6 L399.9,383.7 L399.8,382.8 L399.6,382.0 L399.3,381.4 L399.0,380.9 L398.6,380.5 L398.2,380.2 L397.8,380.1 L397.4,380.2 L396.9,380.4 L396.5,380.8 L396.0,381.3 L395.5,381.9 L395.1,382.6 L394.7,383.5 L394.3,384.4 L394.0,385.5 L393.6,386.6 L393.4,387.7 L393.2,388.8 L393.0,390.0 L393.0,391.1 L392.9,392.2 L393.0,393.2 L393.1,394.2 L393.2,395.1 L393.4,395.8 L393.7,396.5 L394.0,397.0 L394.4,397.4 L394.8,397.6 L395.2,397.7 L395.6,397.7 L396.1,397.5 L396.5,397.1 L397.0,396.6 L397.5,396.0 L397.9,395.2 L398.3,394.4 L398.7,393.4 L399.0,392.4 L399.3,391.3 L399.6,390.2 L399.8,389.0 L399.9,387.9 L400.0,386.8 L400.1,385.7Z" fill="#203c7c" stroke="#000" stroke-width="1.35"/>
<polygon points="458.4,440.3 465.7,441.5 477.0,427.7 469.6,426.5" fill="#b4b4b4" stroke="#000" stroke-width="1.35" stroke-linejoin="round"/><polygon points="462.8,507.0 470.1,508.3 465.7,441.5 458.4,440.3" fill="#e0e0e0" stroke="#000" stroke-width="1.35" stroke-linejoin="round"/><polygon points="470.1,508.3 481.4,494.5 477.0,427.7 465.7,441.5" fill="#969696" stroke="#000" stroke-width="1.35" stroke-linejoin="round"/>
<path d="M638.2,394.5 L656.5,397.6 L656.9,397.7 L657.3,397.9 L657.7,398.3 L658.0,398.8 L658.3,399.5 L658.5,400.3 L658.6,401.1 L658.7,402.1 L658.8,403.1 L658.7,404.2 L658.6,405.4 L658.5,406.5 L658.3,407.7 L658.0,408.8 L657.7,409.9 L657.4,410.9 L657.0,411.8 L656.6,412.7 L656.2,413.4 L655.7,414.1 L655.2,414.6 L654.8,414.9 L654.3,415.1 L653.9,415.2 L635.5,412.1 L635.1,412.0 L634.7,411.8 L634.4,411.4 L634.1,410.9 L633.8,410.2 L633.6,409.4 L633.4,408.6 L633.3,407.6 L633.3,406.6 L633.3,405.5 L633.4,404.3 L633.6,403.2 L633.8,402.0 L634.0,400.9 L634.3,399.8 L634.7,398.8 L635.1,397.9 L635.5,397.0 L635.9,396.3 L636.4,395.6 L636.8,395.1 L637.3,394.8 L637.7,394.6Z" fill="url(#gb)" stroke="#000" stroke-width="1.35" stroke-linejoin="round"/><path d="M658.7,402.1 L658.6,401.1 L658.5,400.3 L658.3,399.5 L658.0,398.8 L657.7,398.3 L657.3,397.9 L656.9,397.7 L656.5,397.6 L656.1,397.7 L655.6,397.9 L655.2,398.2 L654.7,398.7 L654.2,399.4 L653.8,400.1 L653.4,401.0 L653.0,401.9 L652.7,402.9 L652.4,404.0 L652.1,405.2 L651.9,406.3 L651.8,407.5 L651.7,408.6 L651.6,409.7 L651.7,410.7 L651.8,411.7 L651.9,412.5 L652.1,413.3 L652.4,414.0 L652.7,414.5 L653.1,414.9 L653.5,415.1 L653.9,415.2 L654.3,415.1 L654.8,414.9 L655.2,414.6 L655.7,414.1 L656.2,413.4 L656.6,412.7 L657.0,411.8 L657.4,410.9 L657.7,409.9 L658.0,408.8 L658.3,407.7 L658.5,406.5 L658.6,405.4 L658.7,404.2 L658.8,403.1Z" fill="#203c7c" stroke="#000" stroke-width="1.35"/>
<path d="M478.9,380.8 L492.7,383.1 L493.1,383.2 L493.5,383.4 L493.8,383.8 L494.1,384.3 L494.4,385.0 L494.6,385.8 L494.8,386.6 L494.9,387.6 L494.9,388.6 L494.9,389.7 L494.8,390.9 L494.6,392.0 L494.4,393.2 L494.2,394.3 L493.9,395.4 L493.5,396.4 L493.2,397.3 L492.7,398.2 L492.3,398.9 L491.8,399.6 L491.4,400.1 L490.9,400.4 L490.5,400.6 L490.0,400.7 L476.3,398.4 L475.9,398.3 L475.5,398.0 L475.1,397.7 L474.8,397.1 L474.5,396.5 L474.3,395.7 L474.2,394.8 L474.1,393.9 L474.0,392.8 L474.1,391.7 L474.1,390.6 L474.3,389.5 L474.5,388.3 L474.7,387.2 L475.0,386.1 L475.4,385.1 L475.8,384.1 L476.2,383.3 L476.6,382.5 L477.1,381.9 L477.6,381.4 L478.0,381.1 L478.5,380.8Z" fill="url(#gb)" stroke="#000" stroke-width="1.35" stroke-linejoin="round"/><path d="M494.9,387.6 L494.8,386.6 L494.6,385.8 L494.4,385.0 L494.1,384.3 L493.8,383.8 L493.5,383.4 L493.1,383.2 L492.7,383.1 L492.2,383.2 L491.8,383.4 L491.3,383.7 L490.8,384.2 L490.4,384.9 L489.9,385.6 L489.5,386.5 L489.1,387.4 L488.8,388.4 L488.5,389.5 L488.2,390.7 L488.0,391.8 L487.9,392.9 L487.8,394.1 L487.8,395.2 L487.8,396.2 L487.9,397.2 L488.1,398.0 L488.3,398.8 L488.5,399.5 L488.9,400.0 L489.2,400.4 L489.6,400.6 L490.0,400.7 L490.5,400.6 L490.9,400.4 L491.4,400.1 L491.8,399.6 L492.3,398.9 L492.7,398.2 L493.2,397.3 L493.5,396.4 L493.9,395.4 L494.2,394.3 L494.4,393.2 L494.6,392.0 L494.8,390.9 L494.9,389.7 L494.9,388.6Z" fill="#203c7c" stroke="#000" stroke-width="1.35"/>
<path d="M374.7,389.3 L388.4,391.7 L388.8,391.7 L389.2,392.0 L389.6,392.4 L389.9,392.9 L390.1,393.5 L390.3,394.3 L390.5,395.2 L390.6,396.1 L390.6,397.2 L390.6,398.3 L390.5,399.4 L390.4,400.6 L390.2,401.7 L389.9,402.8 L389.6,403.9 L389.3,404.9 L388.9,405.9 L388.5,406.7 L388.0,407.5 L387.6,408.1 L387.1,408.6 L386.7,409.0 L386.2,409.2 L385.8,409.2 L372.0,406.9 L371.6,406.8 L371.2,406.6 L370.8,406.2 L370.5,405.7 L370.3,405.0 L370.1,404.3 L369.9,403.4 L369.8,402.4 L369.8,401.4 L369.8,400.3 L369.9,399.2 L370.0,398.0 L370.2,396.9 L370.5,395.7 L370.8,394.7 L371.1,393.6 L371.5,392.7 L371.9,391.8 L372.4,391.1 L372.8,390.4 L373.3,390.0 L373.8,389.6 L374.2,389.4Z" fill="url(#gb)" stroke="#000" stroke-width="1.35" stroke-linejoin="round"/><path d="M390.6,396.1 L390.5,395.2 L390.3,394.3 L390.1,393.5 L389.9,392.9 L389.6,392.4 L389.2,392.0 L388.8,391.7 L388.4,391.7 L388.0,391.7 L387.5,391.9 L387.0,392.3 L386.6,392.8 L386.1,393.4 L385.7,394.2 L385.3,395.0 L384.9,396.0 L384.5,397.0 L384.2,398.1 L384.0,399.2 L383.8,400.3 L383.6,401.5 L383.5,402.6 L383.5,403.7 L383.6,404.7 L383.7,405.7 L383.8,406.6 L384.0,407.4 L384.3,408.0 L384.6,408.5 L384.9,408.9 L385.3,409.1 L385.8,409.2 L386.2,409.2 L386.7,409.0 L387.1,408.6 L387.6,408.1 L388.0,407.5 L388.5,406.7 L388.9,405.9 L389.3,404.9 L389.6,403.9 L389.9,402.8 L390.2,401.7 L390.4,400.6 L390.5,399.4 L390.6,398.3 L390.6,397.2Z" fill="#203c7c" stroke="#000" stroke-width="1.35"/>
<polygon points="630.5,382.4 658.5,387.1 667.6,376.0 639.6,371.3" fill="#b48202" stroke="#000" stroke-width="1.35" stroke-linejoin="round"/><polygon points="631.8,401.4 659.7,406.2 658.5,387.1 630.5,382.4" fill="#e8a802" stroke="#000" stroke-width="1.35" stroke-linejoin="round"/><polygon points="659.7,406.2 668.8,395.0 667.6,376.0 658.5,387.1" fill="#9e7201" stroke="#000" stroke-width="1.35" stroke-linejoin="round"/>
<polygon points="610.1,497.0 644.5,502.9 670.4,471.2 636.0,465.4" fill="#555555" stroke="#000" stroke-width="1.35" stroke-linejoin="round"/><polygon points="611.5,518.1 645.9,523.9 644.5,502.9 610.1,497.0" fill="#6e6e6e" stroke="#000" stroke-width="1.35" stroke-linejoin="round"/><polygon points="645.9,523.9 671.8,492.2 670.4,471.2 644.5,502.9" fill="#4b4b4b" stroke="#000" stroke-width="1.35" stroke-linejoin="round"/><polygon points="608.3,469.8 642.7,475.6 668.6,444.0 634.3,438.2" fill="#555555" stroke="#000" stroke-width="1.35" stroke-linejoin="round"/><polygon points="609.7,490.8 644.1,496.7 642.7,475.6 608.3,469.8" fill="#6e6e6e" stroke="#000" stroke-width="1.35" stroke-linejoin="round"/><polygon points="644.1,496.7 670.0,465.0 668.6,444.0 642.7,475.6" fill="#4b4b4b" stroke="#000" stroke-width="1.35" stroke-linejoin="round"/><polygon points="606.7,445.7 641.1,451.5 667.0,419.9 632.7,414.0" fill="#555555" stroke="#000" stroke-width="1.35" stroke-linejoin="round"/><polygon points="607.9,462.5 642.2,468.3 641.1,451.5 606.7,445.7" fill="#6e6e6e" stroke="#000" stroke-width="1.35" stroke-linejoin="round"/><polygon points="642.2,468.3 668.1,436.7 667.0,419.9 641.1,451.5" fill="#4b4b4b" stroke="#000" stroke-width="1.35" stroke-linejoin="round"/>
<polygon points="666.9,444.0 674.0,445.2 787.9,305.9 780.9,304.7" fill="#607b7a" stroke="#000" stroke-width="1.35" stroke-linejoin="round"/><polygon points="674.3,556.2 681.4,557.4 674.0,445.2 666.9,444.0" fill="#7c9f9e" stroke="#000" stroke-width="1.35" stroke-linejoin="round"/><polygon points="681.4,557.4 795.3,418.2 787.9,305.9 674.0,445.2" fill="#546c6b" stroke="#000" stroke-width="1.35" stroke-linejoin="round"/>
<path d="M782.1,339.6 L800.4,342.7 L800.8,342.8 L801.2,343.0 L801.6,343.4 L801.9,343.9 L802.1,344.6 L802.3,345.4 L802.5,346.2 L802.6,347.2 L802.6,348.2 L802.6,349.3 L802.5,350.5 L802.4,351.6 L802.2,352.8 L801.9,353.9 L801.6,355.0 L801.3,356.0 L800.9,356.9 L800.5,357.8 L800.0,358.5 L799.6,359.2 L799.1,359.7 L798.7,360.0 L798.2,360.2 L797.8,360.3 L779.4,357.2 L779.0,357.1 L778.6,356.9 L778.3,356.5 L777.9,356.0 L777.7,355.3 L777.5,354.5 L777.3,353.7 L777.2,352.7 L777.2,351.7 L777.2,350.6 L777.3,349.4 L777.4,348.3 L777.6,347.1 L777.9,346.0 L778.2,344.9 L778.5,343.9 L778.9,343.0 L779.3,342.1 L779.8,341.4 L780.2,340.7 L780.7,340.2 L781.2,339.9 L781.6,339.7Z" fill="url(#gb)" stroke="#000" stroke-width="1.35" stroke-linejoin="round"/><path d="M802.6,347.2 L802.5,346.2 L802.3,345.4 L802.1,344.6 L801.9,343.9 L801.6,343.4 L801.2,343.0 L800.8,342.8 L800.4,342.7 L800.0,342.8 L799.5,343.0 L799.0,343.3 L798.6,343.8 L798.1,344.5 L797.7,345.2 L797.3,346.1 L796.9,347.0 L796.5,348.0 L796.2,349.1 L796.0,350.2 L795.8,351.4 L795.6,352.5 L795.5,353.7 L795.5,354.8 L795.6,355.8 L795.7,356.8 L795.8,357.6 L796.0,358.4 L796.3,359.1 L796.6,359.6 L796.9,360.0 L797.3,360.2 L797.8,360.3 L798.2,360.2 L798.7,360.0 L799.1,359.7 L799.6,359.2 L800.0,358.5 L800.5,357.8 L800.9,356.9 L801.3,356.0 L801.6,355.0 L801.9,353.9 L802.2,352.8 L802.4,351.6 L802.5,350.5 L802.6,349.3 L802.6,348.2Z" fill="#203c7c" stroke="#000" stroke-width="1.35"/>
<polygon points="774.4,327.5 802.4,332.2 811.5,321.1 783.5,316.3" fill="#b48202" stroke="#000" stroke-width="1.35" stroke-linejoin="round"/><polygon points="775.7,346.5 803.6,351.2 802.4,332.2 774.4,327.5" fill="#e8a802" stroke="#000" stroke-width="1.35" stroke-linejoin="round"/><polygon points="803.6,351.2 812.7,340.1 811.5,321.1 802.4,332.2" fill="#9e7201" stroke="#000" stroke-width="1.35" stroke-linejoin="round"/>
<polygon points="754.0,442.1 788.4,448.0 814.3,416.3 779.9,410.5" fill="#555555" stroke="#000" stroke-width="1.35" stroke-linejoin="round"/><polygon points="755.4,463.2 789.8,469.0 788.4,448.0 754.0,442.1" fill="#6e6e6e" stroke="#000" stroke-width="1.35" stroke-linejoin="round"/><polygon points="789.8,469.0 815.7,437.3 814.3,416.3 788.4,448.0" fill="#4b4b4b" stroke="#000" stroke-width="1.35" stroke-linejoin="round"/><polygon points="752.2,414.9 786.6,420.7 812.5,389.1 778.1,383.2" fill="#555555" stroke="#000" stroke-width="1.35" stroke-linejoin="round"/><polygon points="753.6,435.9 788.0,441.8 786.6,420.7 752.2,414.9" fill="#6e6e6e" stroke="#000" stroke-width="1.35" stroke-linejoin="round"/><polygon points="788.0,441.8 813.9,410.1 812.5,389.1 786.6,420.7" fill="#4b4b4b" stroke="#000" stroke-width="1.35" stroke-linejoin="round"/><polygon points="750.6,390.8 785.0,396.6 810.9,364.9 776.5,359.1" fill="#555555" stroke="#000" stroke-width="1.35" stroke-linejoin="round"/><polygon points="751.7,407.6 786.1,413.4 785.0,396.6 750.6,390.8" fill="#6e6e6e" stroke="#000" stroke-width="1.35" stroke-linejoin="round"/><polygon points="786.1,413.4 812.0,381.7 810.9,364.9 785.0,396.6" fill="#4b4b4b" stroke="#000" stroke-width="1.35" stroke-linejoin="round"/>
<polygon points="761.5,342.4 782.8,346.0 790.3,336.8 769.1,333.2" fill="#b48202" stroke="#000" stroke-width="1.35" stroke-linejoin="round"/><polygon points="762.5,357.6 783.8,361.2 782.8,346.0 761.5,342.4" fill="#e8a802" stroke="#000" stroke-width="1.35" stroke-linejoin="round"/><polygon points="783.8,361.2 791.3,352.0 790.3,336.8 782.8,346.0" fill="#9e7201" stroke="#000" stroke-width="1.35" stroke-linejoin="round"/>
<polygon points="736.8,408.2 744.1,409.4 755.4,395.6 748.1,394.4" fill="#b4b4b4" stroke="#000" stroke-width="1.35" stroke-linejoin="round"/><polygon points="741.2,474.9 748.5,476.2 744.1,409.4 736.8,408.2" fill="#e0e0e0" stroke="#000" stroke-width="1.35" stroke-linejoin="round"/><polygon points="748.5,476.2 759.8,462.4 755.4,395.6 744.1,409.4" fill="#969696" stroke="#000" stroke-width="1.35" stroke-linejoin="round"/>
<path d="M757.4,348.7 L771.1,351.0 L771.5,351.1 L771.9,351.3 L772.3,351.7 L772.6,352.2 L772.8,352.9 L773.0,353.7 L773.2,354.5 L773.3,355.5 L773.3,356.5 L773.3,357.6 L773.2,358.8 L773.1,359.9 L772.9,361.0 L772.6,362.2 L772.3,363.3 L772.0,364.3 L771.6,365.2 L771.2,366.1 L770.7,366.8 L770.3,367.5 L769.8,368.0 L769.4,368.3 L768.9,368.5 L768.5,368.6 L754.7,366.3 L754.3,366.2 L753.9,365.9 L753.5,365.5 L753.2,365.0 L753.0,364.4 L752.8,363.6 L752.6,362.7 L752.5,361.8 L752.5,360.7 L752.5,359.6 L752.6,358.5 L752.7,357.4 L752.9,356.2 L753.2,355.1 L753.5,354.0 L753.8,353.0 L754.2,352.0 L754.6,351.2 L755.1,350.4 L755.5,349.8 L756.0,349.3 L756.5,348.9 L756.9,348.7Z" fill="url(#gb)" stroke="#000" stroke-width="1.35" stroke-linejoin="round"/><path d="M773.3,355.5 L773.2,354.5 L773.0,353.7 L772.8,352.9 L772.6,352.2 L772.3,351.7 L771.9,351.3 L771.5,351.1 L771.1,351.0 L770.7,351.1 L770.2,351.3 L769.7,351.6 L769.3,352.1 L768.8,352.8 L768.4,353.5 L768.0,354.4 L767.6,355.3 L767.2,356.3 L766.9,357.4 L766.7,358.5 L766.5,359.7 L766.3,360.8 L766.2,362.0 L766.2,363.1 L766.3,364.1 L766.4,365.1 L766.5,365.9 L766.7,366.7 L767.0,367.4 L767.3,367.9 L767.6,368.3 L768.0,368.5 L768.5,368.6 L768.9,368.5 L769.4,368.3 L769.8,368.0 L770.3,367.5 L770.7,366.8 L771.2,366.1 L771.6,365.2 L772.0,364.3 L772.3,363.3 L772.6,362.2 L772.9,361.0 L773.1,359.9 L773.2,358.8 L773.3,357.6 L773.3,356.5Z" fill="#203c7c" stroke="#000" stroke-width="1.35"/>
<path d="M747.9,360.2 L761.7,362.5 L762.1,362.6 L762.5,362.8 L762.8,363.2 L763.2,363.7 L763.4,364.4 L763.6,365.2 L763.8,366.0 L763.9,367.0 L763.9,368.0 L763.9,369.1 L763.8,370.3 L763.7,371.4 L763.5,372.6 L763.2,373.7 L762.9,374.8 L762.6,375.8 L762.2,376.7 L761.8,377.6 L761.3,378.3 L760.9,379.0 L760.4,379.5 L759.9,379.8 L759.5,380.0 L759.0,380.1 L745.3,377.8 L744.9,377.7 L744.5,377.4 L744.1,377.1 L743.8,376.5 L743.6,375.9 L743.3,375.1 L743.2,374.2 L743.1,373.3 L743.1,372.2 L743.1,371.1 L743.2,370.0 L743.3,368.9 L743.5,367.7 L743.8,366.6 L744.1,365.5 L744.4,364.5 L744.8,363.5 L745.2,362.7 L745.7,361.9 L746.1,361.3 L746.6,360.8 L747.0,360.5 L747.5,360.2Z" fill="url(#gb)" stroke="#000" stroke-width="1.35" stroke-linejoin="round"/><path d="M763.9,367.0 L763.8,366.0 L763.6,365.2 L763.4,364.4 L763.2,363.7 L762.8,363.2 L762.5,362.8 L762.1,362.6 L761.7,362.5 L761.2,362.6 L760.8,362.8 L760.3,363.1 L759.9,363.6 L759.4,364.3 L759.0,365.0 L758.5,365.9 L758.2,366.8 L757.8,367.8 L757.5,368.9 L757.3,370.1 L757.1,371.2 L756.9,372.3 L756.8,373.5 L756.8,374.6 L756.8,375.6 L756.9,376.6 L757.1,377.4 L757.3,378.2 L757.6,378.9 L757.9,379.4 L758.2,379.8 L758.6,380.0 L759.0,380.1 L759.5,380.0 L759.9,379.8 L760.4,379.5 L760.9,379.0 L761.3,378.3 L761.8,377.6 L762.2,376.7 L762.6,375.8 L762.9,374.8 L763.2,373.7 L763.5,372.6 L763.7,371.4 L763.8,370.3 L763.9,369.1 L763.9,368.0Z" fill="#203c7c" stroke="#000" stroke-width="1.35"/>
<path d="M738.5,371.7 L752.3,374.0 L752.7,374.1 L753.1,374.3 L753.4,374.7 L753.7,375.3 L754.0,375.9 L754.2,376.7 L754.4,377.5 L754.5,378.5 L754.5,379.5 L754.5,380.6 L754.4,381.8 L754.2,382.9 L754.0,384.1 L753.8,385.2 L753.5,386.3 L753.1,387.3 L752.8,388.2 L752.3,389.1 L751.9,389.9 L751.4,390.5 L751.0,391.0 L750.5,391.3 L750.1,391.5 L749.6,391.6 L735.9,389.3 L735.5,389.2 L735.1,388.9 L734.7,388.6 L734.4,388.0 L734.1,387.4 L733.9,386.6 L733.8,385.8 L733.7,384.8 L733.6,383.7 L733.7,382.7 L733.7,381.5 L733.9,380.4 L734.1,379.2 L734.3,378.1 L734.6,377.0 L735.0,376.0 L735.4,375.0 L735.8,374.2 L736.2,373.4 L736.7,372.8 L737.2,372.3 L737.6,372.0 L738.1,371.8Z" fill="url(#gb)" stroke="#000" stroke-width="1.35" stroke-linejoin="round"/><path d="M754.5,378.5 L754.4,377.5 L754.2,376.7 L754.0,375.9 L753.7,375.3 L753.4,374.7 L753.1,374.3 L752.7,374.1 L752.3,374.0 L751.8,374.1 L751.4,374.3 L750.9,374.7 L750.4,375.1 L750.0,375.8 L749.5,376.5 L749.1,377.4 L748.7,378.3 L748.4,379.4 L748.1,380.4 L747.8,381.6 L747.6,382.7 L747.5,383.9 L747.4,385.0 L747.4,386.1 L747.4,387.1 L747.5,388.1 L747.7,389.0 L747.9,389.7 L748.1,390.4 L748.5,390.9 L748.8,391.3 L749.2,391.5 L749.6,391.6 L750.1,391.5 L750.5,391.3 L751.0,391.0 L751.4,390.5 L751.9,389.9 L752.3,389.1 L752.8,388.2 L753.1,387.3 L753.5,386.3 L753.8,385.2 L754.0,384.1 L754.2,382.9 L754.4,381.8 L754.5,380.6 L754.5,379.5Z" fill="#203c7c" stroke="#000" stroke-width="1.35"/>
<path d="M469.5,392.3 L483.2,394.6 L483.7,394.7 L484.1,394.9 L484.4,395.3 L484.7,395.9 L485.0,396.5 L485.2,397.3 L485.4,398.1 L485.4,399.1 L485.5,400.1 L485.5,401.2 L485.4,402.4 L485.2,403.5 L485.0,404.7 L484.8,405.8 L484.5,406.9 L484.1,407.9 L483.7,408.8 L483.3,409.7 L482.9,410.5 L482.4,411.1 L482.0,411.6 L481.5,411.9 L481.0,412.1 L480.6,412.2 L466.9,409.9 L466.4,409.8 L466.0,409.5 L465.7,409.2 L465.4,408.6 L465.1,408.0 L464.9,407.2 L464.8,406.4 L464.7,405.4 L464.6,404.3 L464.6,403.3 L464.7,402.1 L464.9,401.0 L465.1,399.8 L465.3,398.7 L465.6,397.6 L466.0,396.6 L466.4,395.6 L466.8,394.8 L467.2,394.0 L467.7,393.4 L468.1,392.9 L468.6,392.6 L469.1,392.4Z" fill="url(#gb)" stroke="#000" stroke-width="1.35" stroke-linejoin="round"/><path d="M485.4,399.1 L485.4,398.1 L485.2,397.3 L485.0,396.5 L484.7,395.9 L484.4,395.3 L484.1,394.9 L483.7,394.7 L483.2,394.6 L482.8,394.7 L482.3,394.9 L481.9,395.2 L481.4,395.7 L481.0,396.4 L480.5,397.1 L480.1,398.0 L479.7,398.9 L479.4,399.9 L479.1,401.0 L478.8,402.2 L478.6,403.3 L478.5,404.5 L478.4,405.6 L478.4,406.7 L478.4,407.7 L478.5,408.7 L478.7,409.6 L478.9,410.3 L479.1,411.0 L479.4,411.5 L479.8,411.9 L480.2,412.1 L480.6,412.2 L481.0,412.1 L481.5,411.9 L482.0,411.6 L482.4,411.1 L482.9,410.5 L483.3,409.7 L483.7,408.8 L484.1,407.9 L484.5,406.9 L484.8,405.8 L485.0,404.7 L485.2,403.5 L485.4,402.4 L485.5,401.2 L485.5,400.1Z" fill="#203c7c" stroke="#000" stroke-width="1.35"/>
<path d="M725.1,409.2 L743.4,412.3 L743.8,412.4 L744.2,412.7 L744.6,413.1 L744.9,413.6 L745.2,414.2 L745.4,415.0 L745.5,415.9 L745.6,416.8 L745.7,417.9 L745.6,419.0 L745.5,420.1 L745.4,421.2 L745.2,422.4 L744.9,423.5 L744.6,424.6 L744.3,425.6 L743.9,426.6 L743.5,427.4 L743.1,428.2 L742.6,428.8 L742.1,429.3 L741.7,429.7 L741.2,429.9 L740.8,429.9 L722.4,426.8 L722.0,426.7 L721.6,426.5 L721.3,426.1 L721.0,425.6 L720.7,424.9 L720.5,424.2 L720.3,423.3 L720.2,422.3 L720.2,421.3 L720.2,420.2 L720.3,419.1 L720.5,417.9 L720.7,416.8 L720.9,415.6 L721.2,414.6 L721.6,413.5 L721.9,412.6 L722.4,411.7 L722.8,411.0 L723.3,410.4 L723.7,409.9 L724.2,409.5 L724.6,409.3Z" fill="url(#gb)" stroke="#000" stroke-width="1.35" stroke-linejoin="round"/><path d="M745.6,416.8 L745.5,415.9 L745.4,415.0 L745.2,414.2 L744.9,413.6 L744.6,413.1 L744.2,412.7 L743.8,412.4 L743.4,412.3 L743.0,412.4 L742.5,412.6 L742.1,413.0 L741.6,413.5 L741.1,414.1 L740.7,414.8 L740.3,415.7 L739.9,416.6 L739.6,417.7 L739.2,418.8 L739.0,419.9 L738.8,421.0 L738.7,422.2 L738.6,423.3 L738.5,424.4 L738.6,425.4 L738.7,426.4 L738.8,427.3 L739.0,428.0 L739.3,428.7 L739.6,429.2 L740.0,429.6 L740.4,429.8 L740.8,429.9 L741.2,429.9 L741.7,429.7 L742.1,429.3 L742.6,428.8 L743.1,428.2 L743.5,427.4 L743.9,426.6 L744.3,425.6 L744.6,424.6 L744.9,423.5 L745.2,422.4 L745.4,421.2 L745.5,420.1 L745.6,419.0 L745.7,417.9Z" fill="#203c7c" stroke="#000" stroke-width="1.35"/>
<polygon points="617.7,397.3 638.9,400.9 646.4,391.7 625.2,388.1" fill="#b48202" stroke="#000" stroke-width="1.35" stroke-linejoin="round"/><polygon points="618.7,412.5 639.9,416.1 638.9,400.9 617.7,397.3" fill="#e8a802" stroke="#000" stroke-width="1.35" stroke-linejoin="round"/><polygon points="639.9,416.1 647.4,406.9 646.4,391.7 638.9,400.9" fill="#9e7201" stroke="#000" stroke-width="1.35" stroke-linejoin="round"/>
<path d="M460.1,403.8 L473.8,406.1 L474.3,406.2 L474.6,406.5 L475.0,406.8 L475.3,407.4 L475.6,408.0 L475.8,408.8 L475.9,409.7 L476.0,410.6 L476.1,411.7 L476.0,412.7 L476.0,413.9 L475.8,415.0 L475.6,416.2 L475.4,417.3 L475.1,418.4 L474.7,419.4 L474.3,420.4 L473.9,421.2 L473.5,422.0 L473.0,422.6 L472.6,423.1 L472.1,423.4 L471.6,423.7 L471.2,423.7 L457.4,421.4 L457.0,421.3 L456.6,421.1 L456.3,420.7 L456.0,420.2 L455.7,419.5 L455.5,418.7 L455.3,417.9 L455.2,416.9 L455.2,415.9 L455.2,414.8 L455.3,413.6 L455.5,412.5 L455.7,411.3 L455.9,410.2 L456.2,409.1 L456.6,408.1 L456.9,407.2 L457.4,406.3 L457.8,405.6 L458.3,404.9 L458.7,404.4 L459.2,404.1 L459.6,403.9Z" fill="url(#gb)" stroke="#000" stroke-width="1.35" stroke-linejoin="round"/><path d="M476.0,410.6 L475.9,409.7 L475.8,408.8 L475.6,408.0 L475.3,407.4 L475.0,406.8 L474.6,406.5 L474.3,406.2 L473.8,406.1 L473.4,406.2 L472.9,406.4 L472.5,406.8 L472.0,407.3 L471.5,407.9 L471.1,408.6 L470.7,409.5 L470.3,410.4 L470.0,411.5 L469.7,412.5 L469.4,413.7 L469.2,414.8 L469.1,416.0 L469.0,417.1 L469.0,418.2 L469.0,419.2 L469.1,420.2 L469.2,421.1 L469.4,421.8 L469.7,422.5 L470.0,423.0 L470.4,423.4 L470.8,423.6 L471.2,423.7 L471.6,423.7 L472.1,423.4 L472.6,423.1 L473.0,422.6 L473.5,422.0 L473.9,421.2 L474.3,420.4 L474.7,419.4 L475.1,418.4 L475.4,417.3 L475.6,416.2 L475.8,415.0 L476.0,413.9 L476.0,412.7 L476.1,411.7Z" fill="#203c7c" stroke="#000" stroke-width="1.35"/>
<polygon points="717.4,397.1 745.4,401.8 754.5,390.7 726.5,386.0" fill="#b48202" stroke="#000" stroke-width="1.35" stroke-linejoin="round"/><polygon points="718.7,416.1 746.6,420.9 745.4,401.8 717.4,397.1" fill="#e8a802" stroke="#000" stroke-width="1.35" stroke-linejoin="round"/><polygon points="746.6,420.9 755.7,409.8 754.5,390.7 745.4,401.8" fill="#9e7201" stroke="#000" stroke-width="1.35" stroke-linejoin="round"/>
<polygon points="697.0,511.8 731.4,517.6 757.3,485.9 722.9,480.1" fill="#555555" stroke="#000" stroke-width="1.35" stroke-linejoin="round"/><polygon points="698.4,532.8 732.8,538.6 731.4,517.6 697.0,511.8" fill="#6e6e6e" stroke="#000" stroke-width="1.35" stroke-linejoin="round"/><polygon points="732.8,538.6 758.7,506.9 757.3,485.9 731.4,517.6" fill="#4b4b4b" stroke="#000" stroke-width="1.35" stroke-linejoin="round"/><polygon points="695.2,484.5 729.6,490.4 755.5,458.7 721.1,452.9" fill="#555555" stroke="#000" stroke-width="1.35" stroke-linejoin="round"/><polygon points="696.6,505.6 731.0,511.4 729.6,490.4 695.2,484.5" fill="#6e6e6e" stroke="#000" stroke-width="1.35" stroke-linejoin="round"/><polygon points="731.0,511.4 756.9,479.7 755.5,458.7 729.6,490.4" fill="#4b4b4b" stroke="#000" stroke-width="1.35" stroke-linejoin="round"/><polygon points="693.6,460.4 728.0,466.3 753.9,434.6 719.6,428.8" fill="#555555" stroke="#000" stroke-width="1.35" stroke-linejoin="round"/><polygon points="694.7,477.2 729.1,483.1 728.0,466.3 693.6,460.4" fill="#6e6e6e" stroke="#000" stroke-width="1.35" stroke-linejoin="round"/><polygon points="729.1,483.1 755.0,451.4 753.9,434.6 728.0,466.3" fill="#4b4b4b" stroke="#000" stroke-width="1.35" stroke-linejoin="round"/>
<polygon points="592.9,463.1 600.3,464.3 611.5,450.5 604.2,449.3" fill="#b4b4b4" stroke="#000" stroke-width="1.35" stroke-linejoin="round"/><polygon points="597.3,529.8 604.7,531.1 600.3,464.3 592.9,463.1" fill="#e0e0e0" stroke="#000" stroke-width="1.35" stroke-linejoin="round"/><polygon points="604.7,531.1 615.9,517.3 611.5,450.5 600.3,464.3" fill="#969696" stroke="#000" stroke-width="1.35" stroke-linejoin="round"/>
<path d="M613.5,403.6 L627.2,405.9 L627.6,406.0 L628.0,406.2 L628.4,406.6 L628.7,407.1 L629.0,407.8 L629.2,408.6 L629.3,409.4 L629.4,410.4 L629.5,411.4 L629.4,412.5 L629.4,413.7 L629.2,414.8 L629.0,416.0 L628.8,417.1 L628.4,418.2 L628.1,419.2 L627.7,420.1 L627.3,421.0 L626.9,421.7 L626.4,422.4 L625.9,422.9 L625.5,423.2 L625.0,423.4 L624.6,423.5 L610.8,421.2 L610.4,421.1 L610.0,420.8 L609.7,420.5 L609.4,419.9 L609.1,419.3 L608.9,418.5 L608.7,417.6 L608.6,416.7 L608.6,415.6 L608.6,414.5 L608.7,413.4 L608.9,412.3 L609.1,411.1 L609.3,410.0 L609.6,408.9 L610.0,407.9 L610.3,406.9 L610.8,406.1 L611.2,405.3 L611.6,404.7 L612.1,404.2 L612.6,403.9 L613.0,403.6Z" fill="url(#gb)" stroke="#000" stroke-width="1.35" stroke-linejoin="round"/><path d="M629.4,410.4 L629.3,409.4 L629.2,408.6 L629.0,407.8 L628.7,407.1 L628.4,406.6 L628.0,406.2 L627.6,406.0 L627.2,405.9 L626.8,406.0 L626.3,406.2 L625.9,406.5 L625.4,407.0 L624.9,407.7 L624.5,408.4 L624.1,409.3 L623.7,410.2 L623.4,411.2 L623.1,412.3 L622.8,413.5 L622.6,414.6 L622.5,415.7 L622.4,416.9 L622.3,418.0 L622.4,419.0 L622.5,420.0 L622.6,420.8 L622.8,421.6 L623.1,422.3 L623.4,422.8 L623.8,423.2 L624.2,423.4 L624.6,423.5 L625.0,423.4 L625.5,423.2 L625.9,422.9 L626.4,422.4 L626.9,421.7 L627.3,421.0 L627.7,420.1 L628.1,419.2 L628.4,418.2 L628.8,417.1 L629.0,416.0 L629.2,414.8 L629.4,413.7 L629.4,412.5 L629.5,411.4Z" fill="#203c7c" stroke="#000" stroke-width="1.35"/>
<polygon points="704.6,412.0 725.8,415.6 733.3,406.4 712.1,402.8" fill="#b48202" stroke="#000" stroke-width="1.35" stroke-linejoin="round"/><polygon points="705.6,427.2 726.8,430.8 725.8,415.6 704.6,412.0" fill="#e8a802" stroke="#000" stroke-width="1.35" stroke-linejoin="round"/><polygon points="726.8,430.8 734.3,421.7 733.3,406.4 725.8,415.6" fill="#9e7201" stroke="#000" stroke-width="1.35" stroke-linejoin="round"/>
<path d="M604.1,415.1 L617.8,417.4 L618.2,417.5 L618.6,417.7 L619.0,418.1 L619.3,418.7 L619.5,419.3 L619.8,420.1 L619.9,420.9 L620.0,421.9 L620.0,422.9 L620.0,424.0 L619.9,425.2 L619.8,426.3 L619.6,427.5 L619.3,428.6 L619.0,429.7 L618.7,430.7 L618.3,431.7 L617.9,432.5 L617.4,433.3 L617.0,433.9 L616.5,434.4 L616.1,434.7 L615.6,434.9 L615.2,435.0 L601.4,432.7 L601.0,432.6 L600.6,432.3 L600.3,432.0 L599.9,431.4 L599.7,430.8 L599.5,430.0 L599.3,429.2 L599.2,428.2 L599.2,427.2 L599.2,426.1 L599.3,424.9 L599.4,423.8 L599.6,422.6 L599.9,421.5 L600.2,420.4 L600.5,419.4 L600.9,418.4 L601.3,417.6 L601.8,416.8 L602.2,416.2 L602.7,415.7 L603.2,415.4 L603.6,415.2Z" fill="url(#gb)" stroke="#000" stroke-width="1.35" stroke-linejoin="round"/><path d="M620.0,421.9 L619.9,420.9 L619.8,420.1 L619.5,419.3 L619.3,418.7 L619.0,418.1 L618.6,417.7 L618.2,417.5 L617.8,417.4 L617.4,417.5 L616.9,417.7 L616.4,418.1 L616.0,418.5 L615.5,419.2 L615.1,419.9 L614.7,420.8 L614.3,421.7 L613.9,422.8 L613.6,423.8 L613.4,425.0 L613.2,426.1 L613.0,427.3 L613.0,428.4 L612.9,429.5 L613.0,430.5 L613.1,431.5 L613.2,432.4 L613.4,433.1 L613.7,433.8 L614.0,434.3 L614.4,434.7 L614.7,434.9 L615.2,435.0 L615.6,434.9 L616.1,434.7 L616.5,434.4 L617.0,433.9 L617.4,433.3 L617.9,432.5 L618.3,431.7 L618.7,430.7 L619.0,429.7 L619.3,428.6 L619.6,427.5 L619.8,426.3 L619.9,425.2 L620.0,424.0 L620.0,422.9Z" fill="#203c7c" stroke="#000" stroke-width="1.35"/>
<polygon points="679.8,477.8 687.1,479.0 698.4,465.2 691.1,464.0" fill="#b4b4b4" stroke="#000" stroke-width="1.35" stroke-linejoin="round"/><polygon points="684.2,544.5 691.6,545.8 687.1,479.0 679.8,477.8" fill="#e0e0e0" stroke="#000" stroke-width="1.35" stroke-linejoin="round"/><polygon points="691.6,545.8 702.8,532.0 698.4,465.2 687.1,479.0" fill="#969696" stroke="#000" stroke-width="1.35" stroke-linejoin="round"/>
<path d="M700.4,418.3 L714.1,420.6 L714.5,420.7 L714.9,421.0 L715.3,421.3 L715.6,421.9 L715.9,422.5 L716.1,423.3 L716.2,424.2 L716.3,425.1 L716.4,426.2 L716.3,427.3 L716.2,428.4 L716.1,429.5 L715.9,430.7 L715.6,431.8 L715.3,432.9 L715.0,433.9 L714.6,434.9 L714.2,435.7 L713.8,436.5 L713.3,437.1 L712.8,437.6 L712.4,437.9 L711.9,438.2 L711.5,438.2 L697.7,435.9 L697.3,435.8 L696.9,435.6 L696.6,435.2 L696.3,434.7 L696.0,434.0 L695.8,433.2 L695.6,432.4 L695.5,431.4 L695.5,430.4 L695.5,429.3 L695.6,428.1 L695.7,427.0 L695.9,425.8 L696.2,424.7 L696.5,423.6 L696.9,422.6 L697.2,421.7 L697.6,420.8 L698.1,420.1 L698.5,419.4 L699.0,418.9 L699.5,418.6 L699.9,418.4Z" fill="url(#gb)" stroke="#000" stroke-width="1.35" stroke-linejoin="round"/><path d="M716.3,425.1 L716.2,424.2 L716.1,423.3 L715.9,422.5 L715.6,421.9 L715.3,421.3 L714.9,421.0 L714.5,420.7 L714.1,420.6 L713.7,420.7 L713.2,420.9 L712.8,421.3 L712.3,421.8 L711.8,422.4 L711.4,423.1 L711.0,424.0 L710.6,424.9 L710.3,426.0 L710.0,427.1 L709.7,428.2 L709.5,429.3 L709.4,430.5 L709.3,431.6 L709.2,432.7 L709.3,433.7 L709.4,434.7 L709.5,435.6 L709.7,436.3 L710.0,437.0 L710.3,437.5 L710.7,437.9 L711.1,438.1 L711.5,438.2 L711.9,438.2 L712.4,437.9 L712.8,437.6 L713.3,437.1 L713.8,436.5 L714.2,435.7 L714.6,434.9 L715.0,433.9 L715.3,432.9 L715.6,431.8 L715.9,430.7 L716.1,429.5 L716.2,428.4 L716.3,427.3 L716.4,426.2Z" fill="#203c7c" stroke="#000" stroke-width="1.35"/>
<path d="M594.6,426.6 L608.4,428.9 L608.8,429.0 L609.2,429.3 L609.6,429.6 L609.9,430.2 L610.1,430.8 L610.3,431.6 L610.5,432.5 L610.6,433.4 L610.6,434.5 L610.6,435.6 L610.5,436.7 L610.4,437.8 L610.2,439.0 L609.9,440.1 L609.6,441.2 L609.3,442.2 L608.9,443.2 L608.5,444.0 L608.0,444.8 L607.6,445.4 L607.1,445.9 L606.6,446.2 L606.2,446.5 L605.7,446.5 L592.0,444.2 L591.6,444.1 L591.2,443.9 L590.8,443.5 L590.5,443.0 L590.3,442.3 L590.0,441.5 L589.9,440.7 L589.8,439.7 L589.8,438.7 L589.8,437.6 L589.9,436.4 L590.0,435.3 L590.2,434.1 L590.5,433.0 L590.8,431.9 L591.1,430.9 L591.5,430.0 L591.9,429.1 L592.4,428.4 L592.8,427.7 L593.3,427.2 L593.7,426.9 L594.2,426.7Z" fill="url(#gb)" stroke="#000" stroke-width="1.35" stroke-linejoin="round"/><path d="M610.6,433.4 L610.5,432.5 L610.3,431.6 L610.1,430.8 L609.9,430.2 L609.6,429.6 L609.2,429.3 L608.8,429.0 L608.4,428.9 L607.9,429.0 L607.5,429.2 L607.0,429.6 L606.6,430.1 L606.1,430.7 L605.7,431.4 L605.3,432.3 L604.9,433.2 L604.5,434.3 L604.2,435.3 L604.0,436.5 L603.8,437.6 L603.6,438.8 L603.5,439.9 L603.5,441.0 L603.5,442.0 L603.6,443.0 L603.8,443.9 L604.0,444.6 L604.3,445.3 L604.6,445.8 L604.9,446.2 L605.3,446.4 L605.7,446.5 L606.2,446.5 L606.6,446.2 L607.1,445.9 L607.6,445.4 L608.0,444.8 L608.5,444.0 L608.9,443.2 L609.3,442.2 L609.6,441.2 L609.9,440.1 L610.2,439.0 L610.4,437.8 L610.5,436.7 L610.6,435.6 L610.6,434.5Z" fill="#203c7c" stroke="#000" stroke-width="1.35"/>
<path d="M691.0,429.8 L704.7,432.1 L705.1,432.2 L705.5,432.5 L705.9,432.9 L706.2,433.4 L706.4,434.0 L706.7,434.8 L706.8,435.7 L706.9,436.6 L706.9,437.7 L706.9,438.8 L706.8,439.9 L706.7,441.0 L706.5,442.2 L706.2,443.3 L705.9,444.4 L705.6,445.4 L705.2,446.4 L704.8,447.2 L704.3,448.0 L703.9,448.6 L703.4,449.1 L703.0,449.5 L702.5,449.7 L702.1,449.7 L688.3,447.4 L687.9,447.3 L687.5,447.1 L687.1,446.7 L686.8,446.2 L686.6,445.5 L686.4,444.8 L686.2,443.9 L686.1,442.9 L686.1,441.9 L686.1,440.8 L686.2,439.7 L686.3,438.5 L686.5,437.4 L686.8,436.2 L687.1,435.1 L687.4,434.1 L687.8,433.2 L688.2,432.3 L688.7,431.6 L689.1,430.9 L689.6,430.4 L690.1,430.1 L690.5,429.9Z" fill="url(#gb)" stroke="#000" stroke-width="1.35" stroke-linejoin="round"/><path d="M706.9,436.6 L706.8,435.7 L706.7,434.8 L706.4,434.0 L706.2,433.4 L705.9,432.9 L705.5,432.5 L705.1,432.2 L704.7,432.1 L704.3,432.2 L703.8,432.4 L703.3,432.8 L702.9,433.3 L702.4,433.9 L702.0,434.6 L701.6,435.5 L701.2,436.5 L700.8,437.5 L700.5,438.6 L700.3,439.7 L700.1,440.8 L699.9,442.0 L699.8,443.1 L699.8,444.2 L699.9,445.2 L700.0,446.2 L700.1,447.1 L700.3,447.8 L700.6,448.5 L700.9,449.0 L701.2,449.4 L701.6,449.6 L702.1,449.7 L702.5,449.7 L703.0,449.5 L703.4,449.1 L703.9,448.6 L704.3,448.0 L704.8,447.2 L705.2,446.4 L705.6,445.4 L705.9,444.4 L706.2,443.3 L706.5,442.2 L706.7,441.0 L706.8,439.9 L706.9,438.8 L706.9,437.7Z" fill="#203c7c" stroke="#000" stroke-width="1.35"/>
<path d="M681.5,441.3 L695.3,443.7 L695.7,443.7 L696.1,444.0 L696.4,444.4 L696.8,444.9 L697.0,445.5 L697.2,446.3 L697.4,447.2 L697.5,448.1 L697.5,449.2 L697.5,450.3 L697.4,451.4 L697.3,452.6 L697.1,453.7 L696.8,454.8 L696.5,455.9 L696.2,456.9 L695.8,457.9 L695.4,458.7 L694.9,459.5 L694.5,460.1 L694.0,460.6 L693.5,461.0 L693.1,461.2 L692.6,461.2 L678.9,458.9 L678.5,458.8 L678.1,458.6 L677.7,458.2 L677.4,457.7 L677.2,457.0 L676.9,456.3 L676.8,455.4 L676.7,454.4 L676.7,453.4 L676.7,452.3 L676.8,451.2 L676.9,450.0 L677.1,448.9 L677.4,447.7 L677.7,446.7 L678.0,445.6 L678.4,444.7 L678.8,443.8 L679.3,443.1 L679.7,442.5 L680.2,442.0 L680.6,441.6 L681.1,441.4Z" fill="url(#gb)" stroke="#000" stroke-width="1.35" stroke-linejoin="round"/><path d="M697.5,448.1 L697.4,447.2 L697.2,446.3 L697.0,445.5 L696.8,444.9 L696.4,444.4 L696.1,444.0 L695.7,443.7 L695.3,443.7 L694.8,443.7 L694.4,443.9 L693.9,444.3 L693.5,444.8 L693.0,445.4 L692.6,446.2 L692.1,447.0 L691.8,448.0 L691.4,449.0 L691.1,450.1 L690.9,451.2 L690.7,452.3 L690.5,453.5 L690.4,454.6 L690.4,455.7 L690.4,456.8 L690.5,457.7 L690.7,458.6 L690.9,459.4 L691.2,460.0 L691.5,460.5 L691.8,460.9 L692.2,461.2 L692.6,461.2 L693.1,461.2 L693.5,461.0 L694.0,460.6 L694.5,460.1 L694.9,459.5 L695.4,458.7 L695.8,457.9 L696.2,456.9 L696.5,455.9 L696.8,454.8 L697.1,453.7 L697.3,452.6 L697.4,451.4 L697.5,450.3 L697.5,449.2Z" fill="#203c7c" stroke="#000" stroke-width="1.35"/>
</svg>
<div class="toolbar"></div>
<div class="sep" style="left:27px"></div>
<div class="sep" style="left:445px"></div>
<div class="sep" style="left:924px"></div>
<div class="addbtn"></div>
<div class="vsel"></div>
<div class="vsep" style="left:752px"></div>
<div class="vsep" style="left:915px"></div>
<div class="ledge"></div>
<div class="panel">
 <div class="phead"></div>
 <div class="xbtn"></div>
 <div class="scrollshadow"></div>
 <div class="sel"></div>
 <div class="pfoot"></div>
 <div class="trash"></div>
 <div class="apply"></div>
</div>
<div class="badge" style="left:866px;top:54px">1</div><div class="b1m" style="left:878.3px"></div><div class="b1m" style="left:889.9px"></div>
<div class="badge" style="left:264px;top:230.8px">2</div>
<div class="badge" style="left:193px;top:308.2px">3</div>

<svg class="icons" width="1069" height="697" viewBox="0 0 1069 697">
<polygon points="-5.2,16.5 3.0,21.2 -5.2,26.0 -13.4,21.2" fill="#b5d8ec" stroke="#2b86b8" stroke-width="1.2" stroke-linejoin="round" /><polygon points="-13.4,21.2 -5.2,26.0 -5.2,35.5 -13.4,30.8" fill="#8fc3e0" stroke="#2b86b8" stroke-width="1.2" stroke-linejoin="round" /><polygon points="-5.2,26.0 3.0,21.2 3.0,30.8 -5.2,35.5" fill="#9ccbe5" stroke="#2b86b8" stroke-width="1.2" stroke-linejoin="round" />
<polygon points="116.0,14.4 124.7,19.4 116.0,24.4 107.3,19.4" fill="#b9daed" stroke="#2b86b8" stroke-width="1.2" stroke-linejoin="round" /><polygon points="107.3,19.4 116.0,24.4 116.0,34.4 107.3,29.4" fill="#8fc3e0" stroke="#2b86b8" stroke-width="1.2" stroke-linejoin="round" /><polygon points="116.0,24.4 124.7,19.4 124.7,29.4 116.0,34.4" fill="#a3cfe7" stroke="#2b86b8" stroke-width="1.2" stroke-linejoin="round" />
<circle cx="124.6" cy="32.7" r="5.4" fill="#1a79aa" stroke="#fff" stroke-width="1"/>
<path d="M122.4,30.5 L126.8,34.9 M126.8,30.5 L122.4,34.9" stroke="#fff" stroke-width="1.5" stroke-linecap="round"/>
<polygon points="180.2,13.8 188.9,18.8 180.2,23.8 171.5,18.8" fill="#f0f0f0" stroke="#b9b9b9" stroke-width="1.2" stroke-linejoin="round" /><polygon points="171.5,18.8 180.2,23.8 180.2,33.8 171.5,28.8" fill="#e2e2e2" stroke="#b9b9b9" stroke-width="1.2" stroke-linejoin="round" /><polygon points="180.2,23.8 188.9,18.8 188.9,28.8 180.2,33.8" fill="#ebebeb" stroke="#b9b9b9" stroke-width="1.2" stroke-linejoin="round" />
<path d="M185,25.2 C188,22.6 191.5,24.4 194.6,21.2 L193.6,31.8 C190.5,34.6 188,32.6 185.6,35.6 Z" fill="#6fb3da" stroke="#2b86b8" stroke-width="1.1" stroke-linejoin="round"/>
<polygon points="250.8,15.0 262.5,19.9 250.8,24.8 239.1,19.9" fill="#a8d2e9" stroke="#2b86b8" stroke-width="1.2" stroke-linejoin="round" /><polygon points="239.1,19.9 250.8,24.8 250.8,34.6 239.1,29.7" fill="#7fbbdc" stroke="#2b86b8" stroke-width="1.2" stroke-linejoin="round" /><polygon points="250.8,24.8 262.5,19.9 262.5,29.7 250.8,34.6" fill="#8fc5e2" stroke="#2b86b8" stroke-width="1.2" stroke-linejoin="round" />
<polygon points="250.8,16.4 256.7,19.5 250.8,22.6 244.9,19.5" fill="#b9daed" stroke="#2b86b8" stroke-width="1.0" stroke-linejoin="round" /><polygon points="244.9,19.5 250.8,22.6 250.8,28.8 244.9,25.7" fill="#8fc3e0" stroke="#2b86b8" stroke-width="1.0" stroke-linejoin="round" /><polygon points="250.8,22.6 256.7,19.5 256.7,25.7 250.8,28.8" fill="#a3cfe7" stroke="#2b86b8" stroke-width="1.0" stroke-linejoin="round" />
<path d="M246.5,26 V33 M250.8,27 V34.4 M255,26 V33" stroke="#2b86b8" stroke-width="1" opacity=".8"/>
<path d="M273.6,31.8 L278.0,36 L282.4,31.8" fill="none" stroke="#6a6a6a" stroke-width="1.3" stroke-linecap="round" stroke-linejoin="round"/>
<path d="M357.6,31.8 L362.0,36 L366.4,31.8" fill="none" stroke="#6a6a6a" stroke-width="1.3" stroke-linecap="round" stroke-linejoin="round"/>
<polygon points="330.8,21.4 336.0,24.4 330.8,27.4 325.6,24.4" fill="#b9daed" stroke="#2b86b8" stroke-width="1.1" stroke-linejoin="round" /><polygon points="325.6,24.4 330.8,27.4 330.8,33.4 325.6,30.4" fill="#6fb1d8" stroke="#2b86b8" stroke-width="1.1" stroke-linejoin="round" /><polygon points="330.8,27.4 336.0,24.4 336.0,30.4 330.8,33.4" fill="#8fc3e0" stroke="#2b86b8" stroke-width="1.1" stroke-linejoin="round" />
<path d="M330.8,21 V16 M328.3,18.3 L330.8,15.8 L333.3,18.3" fill="none" stroke="#2b86b8" stroke-width="1.3" stroke-linecap="round" stroke-linejoin="round"/>
<path d="M325,30.8 L321.6,32.6 M321.6,29.6 V32.6 H324.4 M336.6,30.8 L340,32.6 M340,29.6 V32.6 H337.2" fill="none" stroke="#9ccbe5" stroke-width="1.1" stroke-linecap="round"/>
<polygon points="408.7,13.7 418.4,19.3 408.7,24.9 399.0,19.3" fill="#e3f1f8" stroke="#2387b8" stroke-width="2.0" stroke-linejoin="round" /><polygon points="399.0,19.3 408.7,24.9 408.7,36.1 399.0,30.5" fill="#d3e8f4" stroke="#2387b8" stroke-width="2.0" stroke-linejoin="round" /><polygon points="408.7,24.9 418.4,19.3 418.4,30.5 408.7,36.1" fill="#dbeef7" stroke="#2387b8" stroke-width="2.0" stroke-linejoin="round" />
<polygon points="551.8,13.0 560.5,17.4 551.8,21.6 543.2,17.4" fill="#b5d8ec" stroke="#2b86b8" stroke-width="1.2" stroke-linejoin="round" />
<polygon points="540.9,21.6 550.3,26.2 550.3,35.6 540.9,30.8" fill="#8fc3e0" stroke="#2b86b8" stroke-width="1.2" stroke-linejoin="round" />
<polygon points="553.4,26.2 562.8,21.6 562.8,30.8 553.4,35.6" fill="#8fc3e0" stroke="#2b86b8" stroke-width="1.2" stroke-linejoin="round" />
<polygon points="602.2,19.6 616.3,13.1 616.6,29.5 602.8,36.0" fill="#a3cfe7" stroke="#2b86b8" stroke-width="1.2" stroke-linejoin="round" />
<polygon points="605.6,21.6 613.2,18.0 613.4,26.6 605.9,30.2" fill="#7fbbdc" stroke="#2b86b8" stroke-width="1.0" stroke-linejoin="round" />
<polygon points="618.2,23.5 623.9,26.8 618.2,30.1 612.5,26.8" fill="#f0f0f0" stroke="#b5b5b5" stroke-width="1.0" stroke-linejoin="round" /><polygon points="612.5,26.8 618.2,30.1 618.2,36.7 612.5,33.4" fill="#dcdcdc" stroke="#b5b5b5" stroke-width="1.0" stroke-linejoin="round" /><polygon points="618.2,30.1 623.9,26.8 623.9,33.4 618.2,36.7" fill="#e6e6e6" stroke="#b5b5b5" stroke-width="1.0" stroke-linejoin="round" />
<polygon points="669.1,11.6 680.4,18.1 669.1,24.6 657.8,18.1" fill="#fff" stroke="#cfe5f0" stroke-width="1.1" stroke-linejoin="round" /><polygon points="657.8,18.1 669.1,24.6 669.1,37.6 657.8,31.1" fill="#fff" stroke="#cfe5f0" stroke-width="1.1" stroke-linejoin="round" /><polygon points="669.1,24.6 680.4,18.1 680.4,31.1 669.1,37.6" fill="#fff" stroke="#cfe5f0" stroke-width="1.1" stroke-linejoin="round" />
<polygon points="669.1,17.0 675.9,20.9 669.1,24.9 662.3,20.9" fill="#b5d8ec" stroke="#1f7fb0" stroke-width="1.6" stroke-linejoin="round" /><polygon points="662.3,20.9 669.1,24.9 669.1,32.8 662.3,28.8" fill="#6fb1d8" stroke="#1f7fb0" stroke-width="1.6" stroke-linejoin="round" /><polygon points="669.1,24.9 675.9,20.9 675.9,28.8 669.1,32.8" fill="#8fc3e0" stroke="#1f7fb0" stroke-width="1.6" stroke-linejoin="round" />
<polygon points="714.6,17.2 723.8,15.4 723.8,29.6 714.9,31.0" fill="#dcdcdc" stroke="#c4c4c4" stroke-width="1.0" stroke-linejoin="round" />
<polygon points="715.7,21.0 731.7,14.1 731.7,29.5 716.0,35.6" fill="#8fc3e0" stroke="#2b86b8" stroke-width="1.2" stroke-linejoin="round" />
<polygon points="726.3,21.7 732.0,25.0 726.3,28.3 720.6,25.0" fill="#c3e0f0" stroke="#2b86b8" stroke-width="1.2" stroke-linejoin="round" /><polygon points="720.6,25.0 726.3,28.3 726.3,34.9 720.6,31.6" fill="#8fc3e0" stroke="#2b86b8" stroke-width="1.2" stroke-linejoin="round" /><polygon points="726.3,28.3 732.0,25.0 732.0,31.6 726.3,34.9" fill="#9ccbe5" stroke="#2b86b8" stroke-width="1.2" stroke-linejoin="round" />
<rect x="797" y="15.2" width="14.6" height="12.2" fill="#fff" stroke="#1b7eae" stroke-width="1.4"/>
<rect x="792.4" y="19.4" width="15.4" height="15" fill="#fff" stroke="#1b7eae" stroke-width="1.4"/>
<polygon points="875.6,27.6 887.0,21.2 894.6,24.2 894.6,30.6 882.6,37.4 875.6,34.0" fill="#e6e6e6" stroke="#c2c2c2" stroke-width="1.0" stroke-linejoin="round" />
<path d="M875.6,27.6 L882.6,30.8 L894.6,24.2 M882.6,30.8 V37.4" fill="none" stroke="#c2c2c2" stroke-width="1"/>
<polygon points="880.1,12.0 886.3,15.6 880.1,19.2 873.9,15.6" fill="#b5d8ec" stroke="#1f7fb0" stroke-width="1.4" stroke-linejoin="round" /><polygon points="873.9,15.6 880.1,19.2 880.1,26.4 873.9,22.8" fill="#5fa9d4" stroke="#1f7fb0" stroke-width="1.4" stroke-linejoin="round" /><polygon points="880.1,19.2 886.3,15.6 886.3,22.8 880.1,26.4" fill="#8fc3e0" stroke="#1f7fb0" stroke-width="1.4" stroke-linejoin="round" />
<rect x="1010.3" y="17.2" width="15.6" height="15.6" fill="#bcdcec"/>
<path d="M1010.3,17 V33 M1025.9,17 V33" stroke="#1b7eae" stroke-width="1.5"/>
<path d="M1013.2,25.1 H1023 M1015.2,23.1 L1013.2,25.1 L1015.2,27.1 M1021,23.1 L1023,25.1 L1021,27.1" fill="none" stroke="#2b86b8" stroke-width="1"/>
<path d="M334.2,103.8 L343.8,113.4 M343.8,103.8 L334.2,113.4" stroke="#444" stroke-width="1.5"/>
<path d="M33.4,323 H46.9 M37.6,322.8 V320.9 Q37.6,320.2 38.3,320.2 H42 Q42.7,320.2 42.7,320.9 V322.8 M34.8,323.2 L35.5,335 Q35.6,336.2 36.8,336.2 H43.5 Q44.7,336.2 44.8,335 L45.5,323.2 M37.6,325.2 V334 M40.15,325.2 V334 M42.7,325.2 V334" fill="none" stroke="#555" stroke-width="1.15" stroke-linecap="round"/>
<polygon points="723.6,99.4 732.2,104.3 723.6,109.3 715.0,104.3" fill="#ebebeb" stroke="#8c8c8c" stroke-width="1.0" stroke-linejoin="round" /><polygon points="715.0,104.3 723.6,109.3 723.6,119.2 715.0,114.2" fill="#b3b3b3" stroke="#8c8c8c" stroke-width="1.0" stroke-linejoin="round" /><polygon points="723.6,109.3 732.2,104.3 732.2,114.2 723.6,119.2" fill="#d2d2d2" stroke="#8c8c8c" stroke-width="1.0" stroke-linejoin="round" />
<path d="M733.6,124.2 H738 V119.8" fill="none" stroke="#9a9a9a" stroke-width="1"/>
<polygon points="778.2,99.4 787.0,104.5 778.2,109.6 769.4,104.5" fill="#f6c9a0" stroke="#111" stroke-width="1.3" stroke-linejoin="round" /><polygon points="769.4,104.5 778.2,109.6 778.2,119.8 769.4,114.7" fill="#e06a00" stroke="#111" stroke-width="1.3" stroke-linejoin="round" /><polygon points="778.2,109.6 787.0,104.5 787.0,114.7 778.2,119.8" fill="#f0a468" stroke="#111" stroke-width="1.3" stroke-linejoin="round" /><circle cx="778.2" cy="99.4" r="1.9" fill="#111"/><circle cx="787.0" cy="104.5" r="1.9" fill="#111"/><circle cx="787.0" cy="114.7" r="1.9" fill="#111"/><circle cx="778.2" cy="119.8" r="1.9" fill="#111"/><circle cx="769.4" cy="114.7" r="1.9" fill="#111"/><circle cx="769.4" cy="104.5" r="1.9" fill="#111"/><circle cx="778.2" cy="109.6" r="1.9" fill="#111"/>
<polygon points="831.3,99.4 840.1,104.5 831.3,109.6 822.5,104.5" fill="#fff" stroke="#111" stroke-width="1.3" stroke-linejoin="round" /><polygon points="822.5,104.5 831.3,109.6 831.3,119.8 822.5,114.7" fill="#e06a00" stroke="#111" stroke-width="1.3" stroke-linejoin="round" /><polygon points="831.3,109.6 840.1,104.5 840.1,114.7 831.3,119.8" fill="#fff" stroke="#111" stroke-width="1.3" stroke-linejoin="round" /><circle cx="831.3" cy="99.4" r="1.9" fill="#111"/><circle cx="840.1" cy="104.5" r="1.9" fill="#111"/><circle cx="840.1" cy="114.7" r="1.9" fill="#111"/><circle cx="831.3" cy="119.8" r="1.9" fill="#111"/><circle cx="822.5" cy="114.7" r="1.9" fill="#111"/><circle cx="822.5" cy="104.5" r="1.9" fill="#111"/><circle cx="831.3" cy="109.6" r="1.9" fill="#111"/>
<path d="M885.3,99.4 L894.1,104.5 L894.1,114.7 L885.3,119.8 L876.5,114.7 L876.5,104.5 Z M885.3,109.6 L876.5,104.5 M885.3,109.6 L894.1,104.5 M885.3,109.6 L885.3,119.8" fill="none" stroke="#e07a1f" stroke-width="1.2"/>
<circle cx="885.3" cy="99.4" r="1.9" fill="#111"/>
<circle cx="894.1" cy="104.5" r="1.9" fill="#111"/>
<circle cx="894.1" cy="114.7" r="1.9" fill="#111"/>
<circle cx="885.3" cy="119.8" r="1.9" fill="#111"/>
<circle cx="876.5" cy="114.7" r="1.9" fill="#111"/>
<circle cx="876.5" cy="104.5" r="1.9" fill="#111"/>
<circle cx="885.3" cy="109.6" r="1.9" fill="#111"/>
<path d="M931.6,101.8 H946.4 V107.5 M931.6,101.8 V113 H941" fill="none" stroke="#222" stroke-width="1.5" stroke-dasharray="3.2 2"/>
<path d="M943.4,109.6 V119.4 L945.6,117.2 L947.2,120.6 L948.6,120 L947.1,116.7 H950.2 Z" fill="#111"/>
</svg>
<span id="t_e" class="t" style="right:1063.40px;transform-origin:right top;top:40.94px;font-size:12px;font-weight:400;color:#333;transform:scaleX(0.9398)">e</span>
<span id="t_del" class="t" style="left:100.50px;transform-origin:left top;top:40.94px;font-size:12px;font-weight:400;color:#333;transform:scaleX(0.9398)">Delete</span>
<span id="t_cs" class="t" style="left:153.30px;transform-origin:left top;top:40.94px;font-size:12px;font-weight:400;color:#333;transform:scaleX(0.8734)">Close Sheet</span>
<span id="t_bool" class="t" style="left:231.10px;transform-origin:left top;top:40.94px;font-size:12px;font-weight:400;color:#333;transform:scaleX(0.9059)">Boolean</span>
<span id="t_tr" class="t" style="left:306.70px;transform-origin:left top;top:40.94px;font-size:12px;font-weight:400;color:#333;transform:scaleX(0.9164)">Transform</span>
<span id="t_simp" class="t" style="left:389.60px;transform-origin:left top;top:40.94px;font-size:12px;font-weight:400;color:#333;transform:scaleX(0.9235)">Simplify</span>
<span id="t_fs" class="t" style="left:526.30px;transform-origin:left top;top:40.94px;font-size:12px;font-weight:400;color:#333;transform:scaleX(0.9047)">Facet Split</span>
<span id="t_imp" class="t" style="left:596.30px;transform-origin:left top;top:40.94px;font-size:12px;font-weight:400;color:#333;transform:scaleX(0.9704)">Imprint</span>
<span id="t_sc" class="t" style="left:656.40px;transform-origin:left top;top:40.94px;font-size:12px;font-weight:400;color:#333;transform:scaleX(0.8258)">Scale</span>
<span id="t_sp" class="t" style="left:713.20px;transform-origin:left top;top:40.94px;font-size:12px;font-weight:400;color:#333;transform:scaleX(0.9210)">Split</span>
<span id="t_fix" class="t" style="left:760.70px;transform-origin:left top;top:40.94px;font-size:12px;font-weight:400;color:#333;transform:scaleX(0.9244)">Fix interferences</span>
<span id="t_add" class="t" style="left:861.20px;transform-origin:left top;top:40.94px;font-size:12px;font-weight:400;color:#333;transform:scaleX(0.8954)">Add CAD</span>
<span id="t_gaps" class="t" style="left:1005.70px;transform-origin:left top;top:40.94px;font-size:12px;font-weight:400;color:#333;transform:scaleX(0.8505)">Gaps</span>
<span id="t_int" class="t" style="left:1054.90px;transform-origin:left top;top:40.94px;font-size:12px;font-weight:400;color:#333;transform:scaleX(1.0449)">Intersect</span>
<span id="t_body" class="t" style="left:47.50px;transform-origin:left top;top:23.82px;font-size:15px;font-weight:400;color:#6a6a6a;transform:scaleX(0.8138)">BODY</span>
<span id="t_model" class="t" style="left:465.30px;transform-origin:left top;top:23.82px;font-size:15px;font-weight:400;color:#6a6a6a;transform:scaleX(0.8286)">MODEL</span>
<span id="t_tools" class="t" style="left:944.00px;transform-origin:left top;top:23.32px;font-size:15px;font-weight:400;color:#6a6a6a;transform:scaleX(0.7770)">TOOLS</span>
<span id="t_title" class="t" style="left:23.50px;transform-origin:left top;-webkit-text-stroke:.55px #2b2b2b;top:97.95px;font-size:18.4px;font-weight:400;color:#2b2b2b;transform:scaleX(1.0108)">Add CAD</span>
<span id="t_i1" class="t" style="left:23.20px;transform-origin:left top;top:166.12px;font-size:15px;font-weight:400;color:#333;transform:scaleX(1.0515)">Electronics Box</span>
<span id="t_i1s" class="t" style="left:23.20px;transform-origin:left top;top:192.74px;font-size:13px;font-weight:400;color:#6b6b6b;transform:scaleX(1.0091)">772 faces, 122 volumes, 940 nodes, 1465 edges</span>
<span id="t_i2" class="t" style="left:23.20px;transform-origin:left top;top:236.12px;font-size:15px;font-weight:400;color:#333;transform:scaleX(1.0484)">Large Capacitor</span>
<span id="t_i2s" class="t" style="left:23.20px;transform-origin:left top;top:263.13px;font-size:13px;font-weight:400;color:#6b6b6b;transform:scaleX(0.9793)">4 faces, 1 volumes, 0 nodes, 3 edges</span>
<span id="t_apply" class="t" style="left:280.00px;transform-origin:left top;top:320.43px;font-size:15px;font-weight:700;color:#fff;transform:scaleX(0.9743)">Apply</span>
</body></html>
